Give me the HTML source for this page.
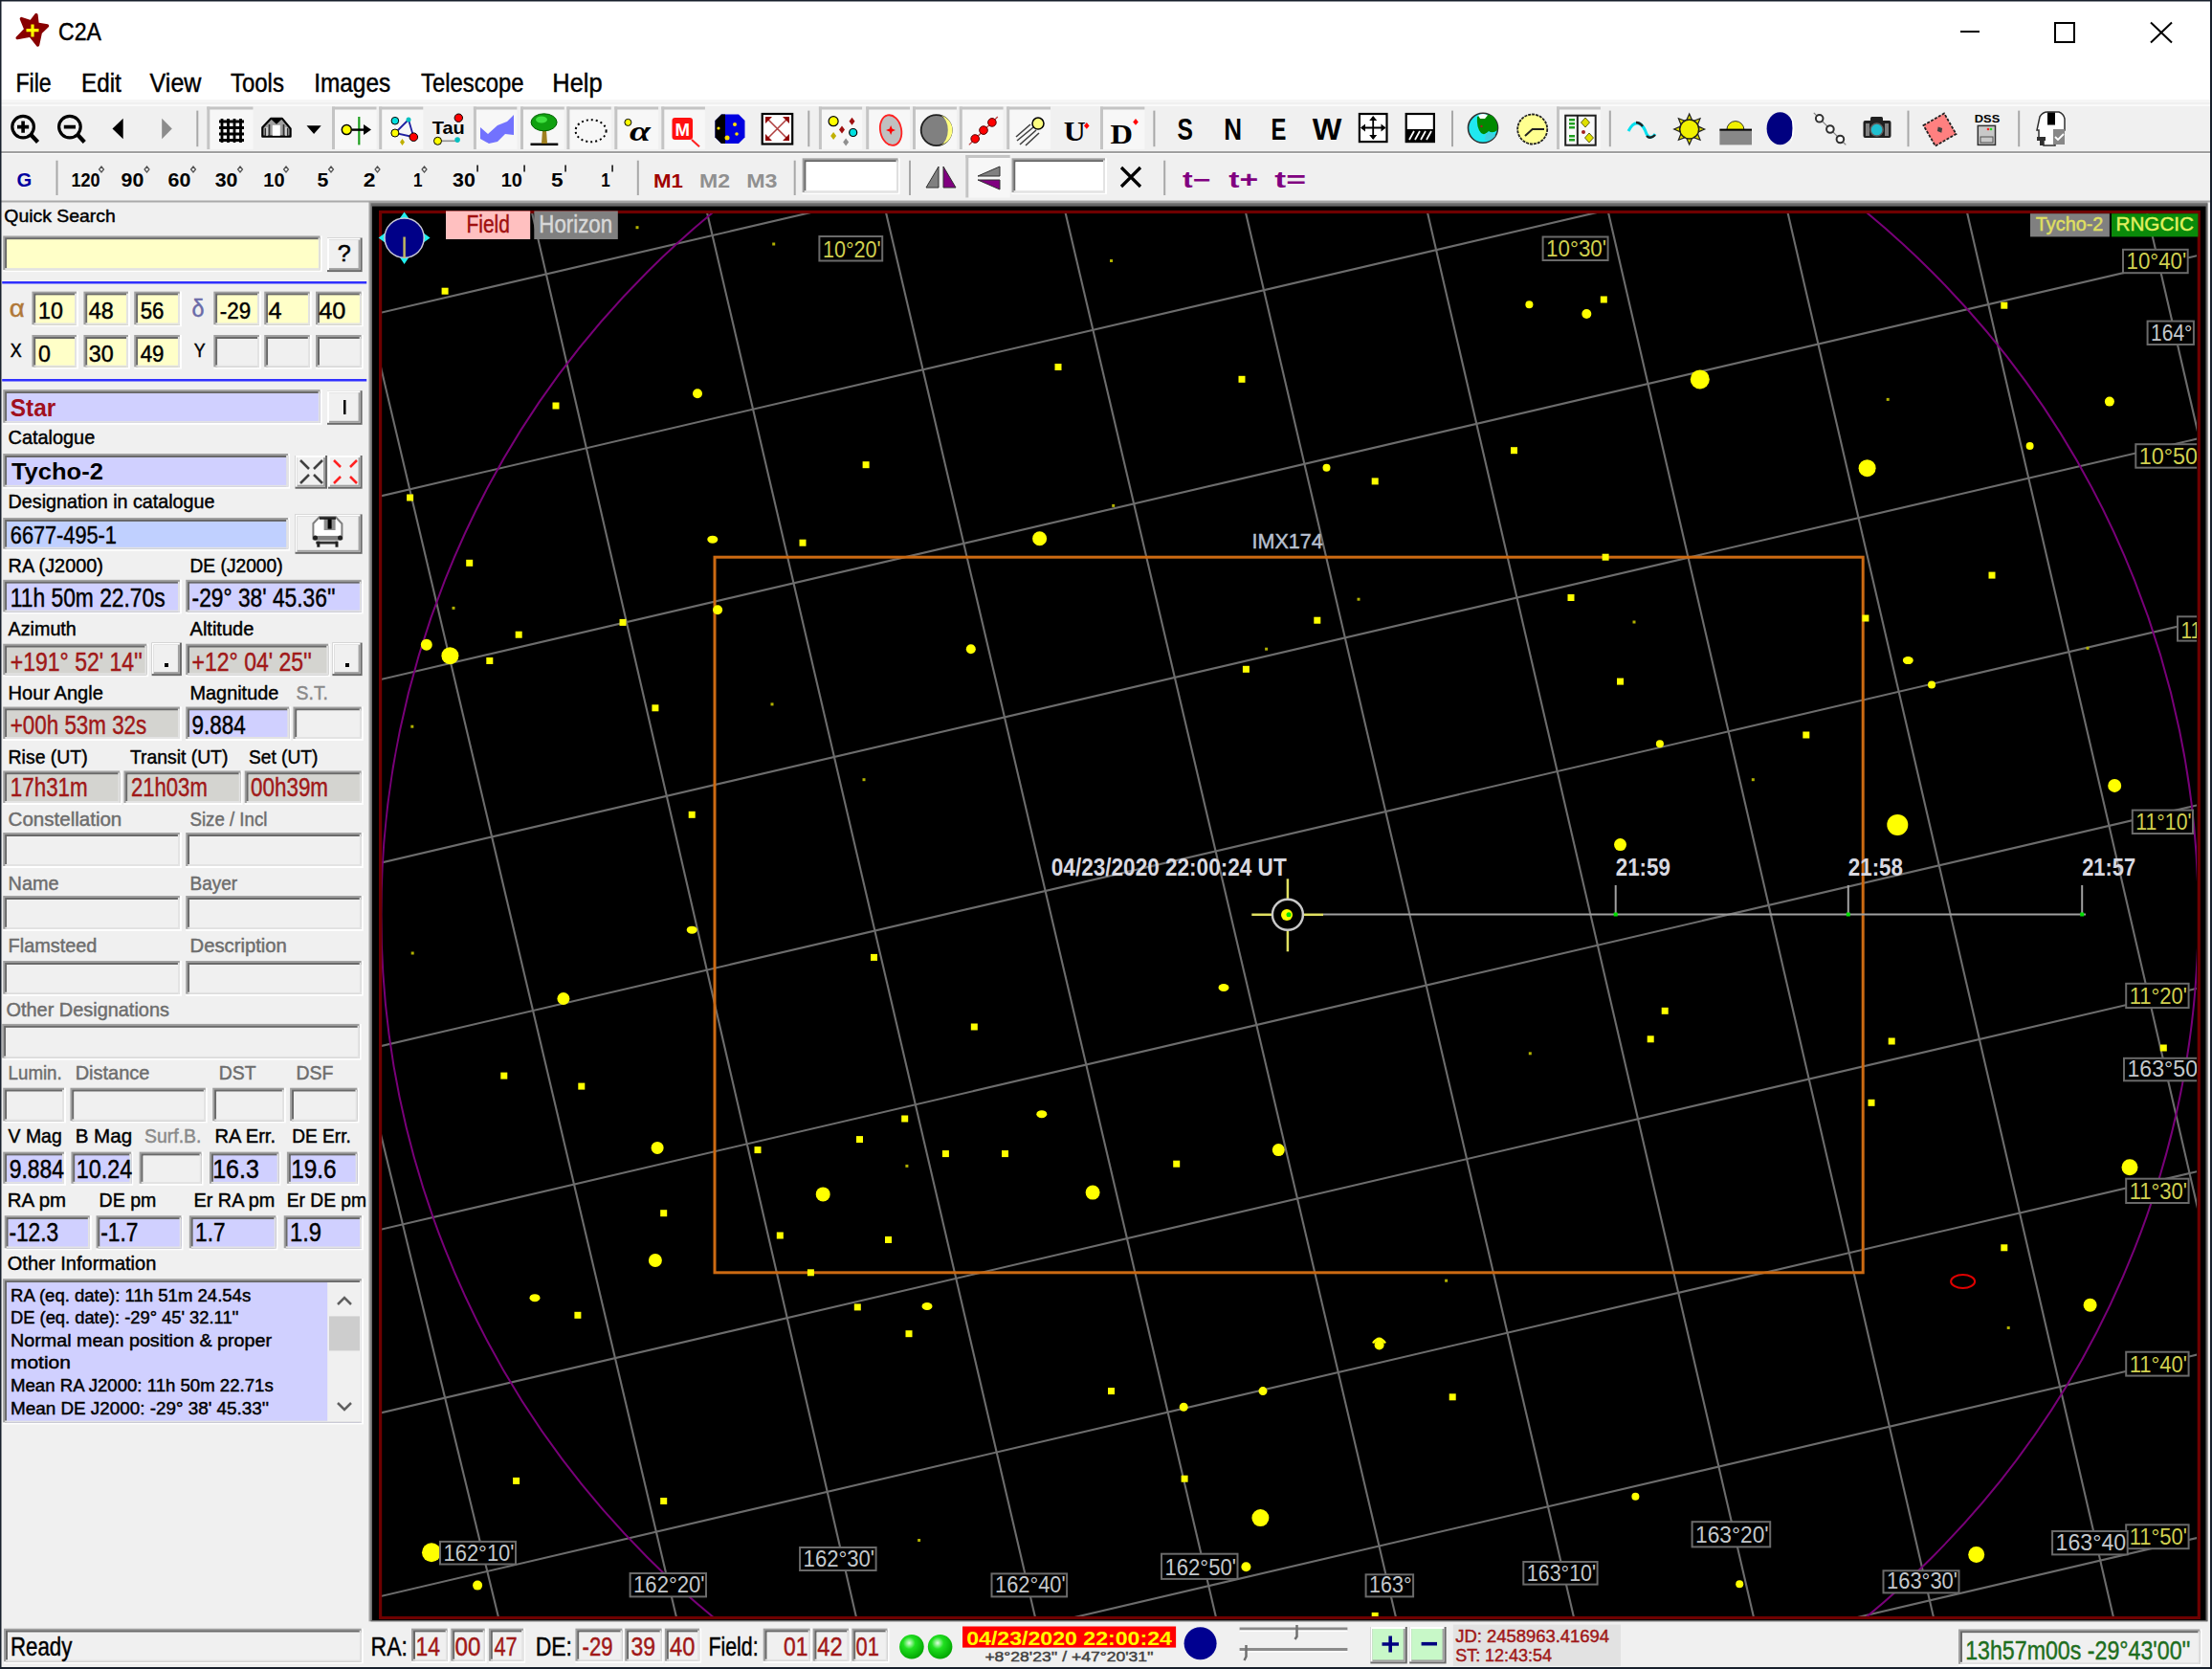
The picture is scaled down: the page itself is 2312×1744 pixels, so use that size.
<!DOCTYPE html>
<html><head><meta charset="utf-8"><style>html,body{margin:0;padding:0;background:#f0f0f0;overflow:hidden}svg{display:block}</style></head>
<body><svg width="2312" height="1744" viewBox="0 0 2312 1744">
<rect x="0" y="0" width="2312" height="1744" fill="#f0f0f0" />
<rect x="0" y="0" width="2312" height="107" fill="#ffffff" />
<path d="M37.9 15.6 L39 25.1 L49.5 27 L42.2 34.1 L39.5 47 L31.6 37 L18.2 39.6 L26.9 30.7 L22.4 19.6 L32.4 22.8Z" fill="#880000" stroke="#880000" stroke-width="3.5" stroke-linejoin="round"/>
<path d="M34 25.5 L34 38.5 M27.5 31.7 L40.5 31.7" stroke="#ffff00" stroke-width="3.2"/>
<text x="61" y="42.4" font-family="Liberation Sans" font-size="26" fill="#000" font-weight="normal" text-anchor="start" textLength="44.8" lengthAdjust="spacingAndGlyphs" stroke="#000" stroke-width="0.45" >C2A</text>
<rect x="2049" y="32" width="20" height="2" fill="#000" />
<rect x="2148" y="24" width="20" height="20" fill="none" stroke="#000" stroke-width="2"/>
<path d="M2248 23.5 L2270 44.5 M2270 23.5 L2248 44.5" stroke="#000" stroke-width="2"/>
<text x="16.4" y="96.4" font-family="Liberation Sans" font-size="27.5" fill="#000" font-weight="normal" text-anchor="start" textLength="37.3" lengthAdjust="spacingAndGlyphs" stroke="#000" stroke-width="0.45" >File</text>
<text x="85" y="96.4" font-family="Liberation Sans" font-size="27.5" fill="#000" font-weight="normal" text-anchor="start" textLength="41.8" lengthAdjust="spacingAndGlyphs" stroke="#000" stroke-width="0.45" >Edit</text>
<text x="156.6" y="96.4" font-family="Liberation Sans" font-size="27.5" fill="#000" font-weight="normal" text-anchor="start" textLength="53.8" lengthAdjust="spacingAndGlyphs" stroke="#000" stroke-width="0.45" >View</text>
<text x="241" y="96.4" font-family="Liberation Sans" font-size="27.5" fill="#000" font-weight="normal" text-anchor="start" textLength="55.9" lengthAdjust="spacingAndGlyphs" stroke="#000" stroke-width="0.45" >Tools</text>
<text x="328.2" y="96.4" font-family="Liberation Sans" font-size="27.5" fill="#000" font-weight="normal" text-anchor="start" textLength="80.0" lengthAdjust="spacingAndGlyphs" stroke="#000" stroke-width="0.45" >Images</text>
<text x="440.1" y="96.4" font-family="Liberation Sans" font-size="27.5" fill="#000" font-weight="normal" text-anchor="start" textLength="107.4" lengthAdjust="spacingAndGlyphs" stroke="#000" stroke-width="0.45" >Telescope</text>
<text x="577.3" y="96.4" font-family="Liberation Sans" font-size="27.5" fill="#000" font-weight="normal" text-anchor="start" textLength="52.3" lengthAdjust="spacingAndGlyphs" stroke="#000" stroke-width="0.45" >Help</text>
<rect x="0" y="104" width="2312" height="3" fill="#f6f6f6" />
<rect x="0" y="107" width="2312" height="52" fill="#f0f0f0" />
<rect x="0" y="109.2" width="2312" height="1.8" fill="#fbfbfb" />
<rect x="0" y="158" width="2312" height="2" fill="#a0a0a0" />
<rect x="0" y="160" width="2312" height="1" fill="#ffffff" />
<rect x="0" y="161" width="2312" height="49" fill="#f0f0f0" />
<rect x="0" y="209.5" width="2312" height="2" fill="#aaaaaa" />
<text x="4.3" y="232.4" font-family="Liberation Sans" font-size="19" fill="#000" font-weight="normal" text-anchor="start" textLength="116.5" lengthAdjust="spacingAndGlyphs" stroke="#000" stroke-width="0.45" >Quick Search</text>
<rect x="3.2" y="246.4" width="333.40000000000003" height="37.70000000000002" fill="#ffffff" />
<rect x="3.2" y="246.4" width="331.40000000000003" height="35.70000000000002" fill="#a0a0a0" />
<rect x="5.2" y="248.4" width="329.40000000000003" height="33.70000000000002" fill="#696969" />
<rect x="7.2" y="250.4" width="327.40000000000003" height="31.700000000000017" fill="#ffffc8" />
<rect x="5.2" y="280.1" width="329.40000000000003" height="2" fill="#e3e3e3" />
<rect x="332.6" y="248.4" width="2" height="33.70000000000002" fill="#e3e3e3" />
<rect x="7.2" y="250.4" width="325.40000000000003" height="29.700000000000017" fill="#ffffc8" />
<rect x="342" y="248.5" width="36.60000000000002" height="35.60000000000002" fill="#696969" />
<rect x="342" y="248.5" width="34.60000000000002" height="33.60000000000002" fill="#ffffff" />
<rect x="344" y="250.5" width="32.60000000000002" height="31.600000000000023" fill="#a0a0a0" />
<rect x="344" y="250.5" width="30.600000000000023" height="29.600000000000023" fill="#f0f0f0" />
<text x="352.8" y="273.4" font-family="Liberation Sans" font-size="24" fill="#000" font-weight="normal" text-anchor="start" textLength="14.0" lengthAdjust="spacingAndGlyphs" stroke="#000" stroke-width="0.45" >?</text>
<rect x="2.2" y="294" width="381" height="2.5" fill="#3030ff" />
<text x="9.7" y="330.5" font-family="Liberation Sans" font-size="26" fill="#b07838" font-weight="normal" text-anchor="start" textLength="16" lengthAdjust="spacingAndGlyphs" stroke="#b07838" stroke-width="0.45" >α</text>
<rect x="33.4" y="304.6" width="48.6" height="36.69999999999999" fill="#ffffff" />
<rect x="33.4" y="304.6" width="46.6" height="34.69999999999999" fill="#a0a0a0" />
<rect x="35.4" y="306.6" width="44.6" height="32.69999999999999" fill="#696969" />
<rect x="37.4" y="308.6" width="42.6" height="30.69999999999999" fill="#ffffc8" />
<rect x="35.4" y="337.3" width="44.6" height="2" fill="#e3e3e3" />
<rect x="78" y="306.6" width="2" height="32.69999999999999" fill="#e3e3e3" />
<rect x="37.4" y="308.6" width="40.6" height="28.69999999999999" fill="#ffffc8" />
<rect x="87.4" y="304.6" width="48.599999999999994" height="36.69999999999999" fill="#ffffff" />
<rect x="87.4" y="304.6" width="46.599999999999994" height="34.69999999999999" fill="#a0a0a0" />
<rect x="89.4" y="306.6" width="44.599999999999994" height="32.69999999999999" fill="#696969" />
<rect x="91.4" y="308.6" width="42.599999999999994" height="30.69999999999999" fill="#ffffc8" />
<rect x="89.4" y="337.3" width="44.599999999999994" height="2" fill="#e3e3e3" />
<rect x="132" y="306.6" width="2" height="32.69999999999999" fill="#e3e3e3" />
<rect x="91.4" y="308.6" width="40.599999999999994" height="28.69999999999999" fill="#ffffc8" />
<rect x="140.2" y="304.6" width="49.70000000000002" height="36.69999999999999" fill="#ffffff" />
<rect x="140.2" y="304.6" width="47.70000000000002" height="34.69999999999999" fill="#a0a0a0" />
<rect x="142.2" y="306.6" width="45.70000000000002" height="32.69999999999999" fill="#696969" />
<rect x="144.2" y="308.6" width="43.70000000000002" height="30.69999999999999" fill="#ffffc8" />
<rect x="142.2" y="337.3" width="45.70000000000002" height="2" fill="#e3e3e3" />
<rect x="185.9" y="306.6" width="2" height="32.69999999999999" fill="#e3e3e3" />
<rect x="144.2" y="308.6" width="41.70000000000002" height="28.69999999999999" fill="#ffffc8" />
<rect x="223.3" y="304.6" width="49.69999999999999" height="36.69999999999999" fill="#ffffff" />
<rect x="223.3" y="304.6" width="47.69999999999999" height="34.69999999999999" fill="#a0a0a0" />
<rect x="225.3" y="306.6" width="45.69999999999999" height="32.69999999999999" fill="#696969" />
<rect x="227.3" y="308.6" width="43.69999999999999" height="30.69999999999999" fill="#ffffc8" />
<rect x="225.3" y="337.3" width="45.69999999999999" height="2" fill="#e3e3e3" />
<rect x="269" y="306.6" width="2" height="32.69999999999999" fill="#e3e3e3" />
<rect x="227.3" y="308.6" width="41.69999999999999" height="28.69999999999999" fill="#ffffc8" />
<rect x="276.2" y="304.6" width="49.60000000000002" height="36.69999999999999" fill="#ffffff" />
<rect x="276.2" y="304.6" width="47.60000000000002" height="34.69999999999999" fill="#a0a0a0" />
<rect x="278.2" y="306.6" width="45.60000000000002" height="32.69999999999999" fill="#696969" />
<rect x="280.2" y="308.6" width="43.60000000000002" height="30.69999999999999" fill="#ffffc8" />
<rect x="278.2" y="337.3" width="45.60000000000002" height="2" fill="#e3e3e3" />
<rect x="321.8" y="306.6" width="2" height="32.69999999999999" fill="#e3e3e3" />
<rect x="280.2" y="308.6" width="41.60000000000002" height="28.69999999999999" fill="#ffffc8" />
<rect x="330" y="304.6" width="49.69999999999999" height="36.69999999999999" fill="#ffffff" />
<rect x="330" y="304.6" width="47.69999999999999" height="34.69999999999999" fill="#a0a0a0" />
<rect x="332" y="306.6" width="45.69999999999999" height="32.69999999999999" fill="#696969" />
<rect x="334" y="308.6" width="43.69999999999999" height="30.69999999999999" fill="#ffffc8" />
<rect x="332" y="337.3" width="45.69999999999999" height="2" fill="#e3e3e3" />
<rect x="375.7" y="306.6" width="2" height="32.69999999999999" fill="#e3e3e3" />
<rect x="334" y="308.6" width="41.69999999999999" height="28.69999999999999" fill="#ffffc8" />
<text x="200.6" y="330.5" font-family="Liberation Sans" font-size="26" fill="#6a6aa8" font-weight="normal" text-anchor="start" textLength="13" lengthAdjust="spacingAndGlyphs" stroke="#6a6aa8" stroke-width="0.45" >δ</text>
<text x="40" y="332.7" font-family="Liberation Sans" font-size="23.5" fill="#000" font-weight="normal" text-anchor="start" textLength="25.8" lengthAdjust="spacingAndGlyphs" stroke="#000" stroke-width="0.45" >10</text>
<text x="92.8" y="332.7" font-family="Liberation Sans" font-size="23.5" fill="#000" font-weight="normal" text-anchor="start" textLength="25.9" lengthAdjust="spacingAndGlyphs" stroke="#000" stroke-width="0.45" >48</text>
<text x="146.7" y="332.7" font-family="Liberation Sans" font-size="23.5" fill="#000" font-weight="normal" text-anchor="start" textLength="24.8" lengthAdjust="spacingAndGlyphs" stroke="#000" stroke-width="0.45" >56</text>
<text x="229.8" y="332.7" font-family="Liberation Sans" font-size="23.5" fill="#000" font-weight="normal" text-anchor="start" textLength="32.3" lengthAdjust="spacingAndGlyphs" stroke="#000" stroke-width="0.45" >-29</text>
<text x="280.5" y="332.7" font-family="Liberation Sans" font-size="23.5" fill="#000" font-weight="normal" text-anchor="start" textLength="14.0" lengthAdjust="spacingAndGlyphs" stroke="#000" stroke-width="0.45" >4</text>
<text x="333.3" y="332.7" font-family="Liberation Sans" font-size="23.5" fill="#000" font-weight="normal" text-anchor="start" textLength="28.1" lengthAdjust="spacingAndGlyphs" stroke="#000" stroke-width="0.45" >40</text>
<rect x="33.4" y="350" width="48.6" height="35.5" fill="#ffffff" />
<rect x="33.4" y="350" width="46.6" height="33.5" fill="#a0a0a0" />
<rect x="35.4" y="352" width="44.6" height="31.5" fill="#696969" />
<rect x="37.4" y="354" width="42.6" height="29.5" fill="#ffffc8" />
<rect x="35.4" y="381.5" width="44.6" height="2" fill="#e3e3e3" />
<rect x="78" y="352" width="2" height="31.5" fill="#e3e3e3" />
<rect x="37.4" y="354" width="40.6" height="27.5" fill="#ffffc8" />
<rect x="87.4" y="350" width="48.599999999999994" height="35.5" fill="#ffffff" />
<rect x="87.4" y="350" width="46.599999999999994" height="33.5" fill="#a0a0a0" />
<rect x="89.4" y="352" width="44.599999999999994" height="31.5" fill="#696969" />
<rect x="91.4" y="354" width="42.599999999999994" height="29.5" fill="#ffffc8" />
<rect x="89.4" y="381.5" width="44.599999999999994" height="2" fill="#e3e3e3" />
<rect x="132" y="352" width="2" height="31.5" fill="#e3e3e3" />
<rect x="91.4" y="354" width="40.599999999999994" height="27.5" fill="#ffffc8" />
<rect x="140.2" y="350" width="49.70000000000002" height="35.5" fill="#ffffff" />
<rect x="140.2" y="350" width="47.70000000000002" height="33.5" fill="#a0a0a0" />
<rect x="142.2" y="352" width="45.70000000000002" height="31.5" fill="#696969" />
<rect x="144.2" y="354" width="43.70000000000002" height="29.5" fill="#ffffc8" />
<rect x="142.2" y="381.5" width="45.70000000000002" height="2" fill="#e3e3e3" />
<rect x="185.9" y="352" width="2" height="31.5" fill="#e3e3e3" />
<rect x="144.2" y="354" width="41.70000000000002" height="27.5" fill="#ffffc8" />
<rect x="223.3" y="350" width="49.69999999999999" height="35.5" fill="#ffffff" />
<rect x="223.3" y="350" width="47.69999999999999" height="33.5" fill="#a0a0a0" />
<rect x="225.3" y="352" width="45.69999999999999" height="31.5" fill="#696969" />
<rect x="227.3" y="354" width="43.69999999999999" height="29.5" fill="#f0f0f0" />
<rect x="225.3" y="381.5" width="45.69999999999999" height="2" fill="#e3e3e3" />
<rect x="269" y="352" width="2" height="31.5" fill="#e3e3e3" />
<rect x="227.3" y="354" width="41.69999999999999" height="27.5" fill="#f0f0f0" />
<rect x="276.2" y="350" width="49.60000000000002" height="35.5" fill="#ffffff" />
<rect x="276.2" y="350" width="47.60000000000002" height="33.5" fill="#a0a0a0" />
<rect x="278.2" y="352" width="45.60000000000002" height="31.5" fill="#696969" />
<rect x="280.2" y="354" width="43.60000000000002" height="29.5" fill="#f0f0f0" />
<rect x="278.2" y="381.5" width="45.60000000000002" height="2" fill="#e3e3e3" />
<rect x="321.8" y="352" width="2" height="31.5" fill="#e3e3e3" />
<rect x="280.2" y="354" width="41.60000000000002" height="27.5" fill="#f0f0f0" />
<rect x="330" y="350" width="49.69999999999999" height="35.5" fill="#ffffff" />
<rect x="330" y="350" width="47.69999999999999" height="33.5" fill="#a0a0a0" />
<rect x="332" y="352" width="45.69999999999999" height="31.5" fill="#696969" />
<rect x="334" y="354" width="43.69999999999999" height="29.5" fill="#f0f0f0" />
<rect x="332" y="381.5" width="45.69999999999999" height="2" fill="#e3e3e3" />
<rect x="375.7" y="352" width="2" height="31.5" fill="#e3e3e3" />
<rect x="334" y="354" width="41.69999999999999" height="27.5" fill="#f0f0f0" />
<text x="10.8" y="372.6" font-family="Liberation Sans" font-size="20" fill="#000" font-weight="normal" text-anchor="start" textLength="11.9" lengthAdjust="spacingAndGlyphs" stroke="#000" stroke-width="0.45" >X</text>
<text x="202.8" y="372.6" font-family="Liberation Sans" font-size="20" fill="#000" font-weight="normal" text-anchor="start" textLength="11.9" lengthAdjust="spacingAndGlyphs" stroke="#000" stroke-width="0.45" >Y</text>
<text x="40" y="378" font-family="Liberation Sans" font-size="23.5" fill="#000" font-weight="normal" text-anchor="start" textLength="12.9" lengthAdjust="spacingAndGlyphs" stroke="#000" stroke-width="0.45" >0</text>
<text x="92.8" y="378" font-family="Liberation Sans" font-size="23.5" fill="#000" font-weight="normal" text-anchor="start" textLength="25.9" lengthAdjust="spacingAndGlyphs" stroke="#000" stroke-width="0.45" >30</text>
<text x="146.7" y="378" font-family="Liberation Sans" font-size="23.5" fill="#000" font-weight="normal" text-anchor="start" textLength="24.8" lengthAdjust="spacingAndGlyphs" stroke="#000" stroke-width="0.45" >49</text>
<rect x="2.2" y="396" width="381" height="2.5" fill="#3030ff" />
<rect x="3.2" y="407.1" width="333.40000000000003" height="36.69999999999999" fill="#ffffff" />
<rect x="3.2" y="407.1" width="331.40000000000003" height="34.69999999999999" fill="#a0a0a0" />
<rect x="5.2" y="409.1" width="329.40000000000003" height="32.69999999999999" fill="#696969" />
<rect x="7.2" y="411.1" width="327.40000000000003" height="30.69999999999999" fill="#d0d0ff" />
<rect x="5.2" y="439.8" width="329.40000000000003" height="2" fill="#e3e3e3" />
<rect x="332.6" y="409.1" width="2" height="32.69999999999999" fill="#e3e3e3" />
<rect x="7.2" y="411.1" width="325.40000000000003" height="28.69999999999999" fill="#d0d0ff" />
<text x="10.8" y="435.2" font-family="Liberation Sans" font-size="26.7" fill="#a01020" font-weight="bold" text-anchor="start" textLength="47.5" lengthAdjust="spacingAndGlyphs" >Star</text>
<rect x="342" y="408.2" width="36.60000000000002" height="35.60000000000002" fill="#696969" />
<rect x="342" y="408.2" width="34.60000000000002" height="33.60000000000002" fill="#ffffff" />
<rect x="344" y="410.2" width="32.60000000000002" height="31.600000000000023" fill="#a0a0a0" />
<rect x="344" y="410.2" width="30.600000000000023" height="29.600000000000023" fill="#f0f0f0" />
<rect x="359" y="418" width="2.5" height="15" fill="#000" />
<text x="8.6" y="464.3" font-family="Liberation Sans" font-size="20.3" fill="#000" font-weight="normal" text-anchor="start" textLength="90.6" lengthAdjust="spacingAndGlyphs" stroke="#000" stroke-width="0.45" >Catalogue</text>
<rect x="3.2" y="474" width="299.90000000000003" height="36.69999999999999" fill="#ffffff" />
<rect x="3.2" y="474" width="297.90000000000003" height="34.69999999999999" fill="#a0a0a0" />
<rect x="5.2" y="476" width="295.90000000000003" height="32.69999999999999" fill="#696969" />
<rect x="7.2" y="478" width="293.90000000000003" height="30.69999999999999" fill="#d0d0ff" />
<rect x="5.2" y="506.7" width="295.90000000000003" height="2" fill="#e3e3e3" />
<rect x="299.1" y="476" width="2" height="32.69999999999999" fill="#e3e3e3" />
<rect x="7.2" y="478" width="291.90000000000003" height="28.69999999999999" fill="#d0d0ff" />
<text x="11.9" y="501" font-family="Liberation Sans" font-size="23.5" fill="#000" font-weight="bold" text-anchor="start" textLength="96.0" lengthAdjust="spacingAndGlyphs" >Tycho-2</text>
<rect x="308.5" y="476" width="33.5" height="34.69999999999999" fill="#696969" />
<rect x="308.5" y="476" width="31.5" height="32.69999999999999" fill="#ffffff" />
<rect x="310.5" y="478" width="29.5" height="30.69999999999999" fill="#a0a0a0" />
<rect x="310.5" y="478" width="27.5" height="28.69999999999999" fill="#f0f0f0" />
<rect x="343" y="476" width="35.60000000000002" height="34.69999999999999" fill="#696969" />
<rect x="343" y="476" width="33.60000000000002" height="32.69999999999999" fill="#ffffff" />
<rect x="345" y="478" width="31.600000000000023" height="30.69999999999999" fill="#a0a0a0" />
<rect x="345" y="478" width="29.600000000000023" height="28.69999999999999" fill="#f0f0f0" />
<g stroke="#404040" stroke-width="2.5" fill="none"><path d="M314 481 L323 490 M337 481 L328 490 M314 505 L323 496 M337 505 L328 496"/></g>
<g stroke="#ff2020" stroke-width="2.5" fill="none"><path d="M349 481 L356 488 M373 481 L366 488 M349 505 L356 498 M373 505 L366 498"/></g>
<text x="8.6" y="531.2" font-family="Liberation Sans" font-size="20.3" fill="#000" font-weight="normal" text-anchor="start" textLength="215.8" lengthAdjust="spacingAndGlyphs" stroke="#000" stroke-width="0.45" >Designation in catalogue</text>
<rect x="3.2" y="541" width="299.90000000000003" height="34.60000000000002" fill="#ffffff" />
<rect x="3.2" y="541" width="297.90000000000003" height="32.60000000000002" fill="#a0a0a0" />
<rect x="5.2" y="543" width="295.90000000000003" height="30.600000000000023" fill="#696969" />
<rect x="7.2" y="545" width="293.90000000000003" height="28.600000000000023" fill="#c0d0ff" />
<rect x="5.2" y="571.6" width="295.90000000000003" height="2" fill="#e3e3e3" />
<rect x="299.1" y="543" width="2" height="30.600000000000023" fill="#e3e3e3" />
<rect x="7.2" y="545" width="291.90000000000003" height="26.600000000000023" fill="#c0d0ff" />
<text x="10.8" y="568" font-family="Liberation Sans" font-size="25.6" fill="#000" font-weight="normal" text-anchor="start" textLength="111.1" lengthAdjust="spacingAndGlyphs" stroke="#000" stroke-width="0.45" >6677-495-1</text>
<rect x="308.5" y="537.4" width="70.10000000000002" height="41.39999999999998" fill="#696969" />
<rect x="308.5" y="537.4" width="68.10000000000002" height="39.39999999999998" fill="#ffffff" />
<rect x="310.5" y="539.4" width="66.10000000000002" height="37.39999999999998" fill="#a0a0a0" />
<rect x="310.5" y="539.4" width="64.10000000000002" height="35.39999999999998" fill="#f0f0f0" />
<g><path d="M327.4 562.8 V547 L333.9 540.3 H350.9 L357.4 547.2 V562.8Z" fill="#ffffff" stroke="#808080" stroke-width="2"/><rect x="338.6" y="541" width="12" height="13" fill="#909090"/><rect x="342.6" y="541" width="4" height="11.6" fill="#000"/><rect x="333.9" y="540.3" width="17" height="2.5" fill="#202020"/><rect x="327.4" y="559.9" width="30" height="4.7" fill="#808080"/><circle cx="329.5" cy="562" r="2.5" fill="#202020"/><circle cx="355.5" cy="562" r="2.5" fill="#202020"/><rect x="330.3" y="565.7" width="22.4" height="2.8" fill="#303030"/><rect x="331.3" y="565.7" width="3" height="6" fill="#202020"/><rect x="350.5" y="565.7" width="3" height="6" fill="#202020"/></g>
<text x="8.6" y="598.3" font-family="Liberation Sans" font-size="20.3" fill="#000" font-weight="normal" text-anchor="start" textLength="99.3" lengthAdjust="spacingAndGlyphs" stroke="#000" stroke-width="0.45" >RA (J2000)</text>
<text x="198.5" y="598.3" font-family="Liberation Sans" font-size="20.3" fill="#000" font-weight="normal" text-anchor="start" textLength="97.1" lengthAdjust="spacingAndGlyphs" stroke="#000" stroke-width="0.45" >DE (J2000)</text>
<rect x="3.2" y="605.8" width="186.70000000000002" height="35.60000000000002" fill="#ffffff" />
<rect x="3.2" y="605.8" width="184.70000000000002" height="33.60000000000002" fill="#a0a0a0" />
<rect x="5.2" y="607.8" width="182.70000000000002" height="31.600000000000023" fill="#696969" />
<rect x="7.2" y="609.8" width="180.70000000000002" height="29.600000000000023" fill="#d0d0ff" />
<rect x="5.2" y="637.4" width="182.70000000000002" height="2" fill="#e3e3e3" />
<rect x="185.9" y="607.8" width="2" height="31.600000000000023" fill="#e3e3e3" />
<rect x="7.2" y="609.8" width="178.70000000000002" height="27.600000000000023" fill="#d0d0ff" />
<rect x="194.2" y="605.8" width="185.5" height="35.60000000000002" fill="#ffffff" />
<rect x="194.2" y="605.8" width="183.5" height="33.60000000000002" fill="#a0a0a0" />
<rect x="196.2" y="607.8" width="181.5" height="31.600000000000023" fill="#696969" />
<rect x="198.2" y="609.8" width="179.5" height="29.600000000000023" fill="#d0d0ff" />
<rect x="196.2" y="637.4" width="181.5" height="2" fill="#e3e3e3" />
<rect x="375.7" y="607.8" width="2" height="31.600000000000023" fill="#e3e3e3" />
<rect x="198.2" y="609.8" width="177.5" height="27.600000000000023" fill="#d0d0ff" />
<text x="10.8" y="633.9" font-family="Liberation Sans" font-size="27" fill="#000" font-weight="normal" text-anchor="start" textLength="161.8" lengthAdjust="spacingAndGlyphs" stroke="#000" stroke-width="0.45" >11h 50m 22.70s</text>
<text x="200.6" y="633.9" font-family="Liberation Sans" font-size="27" fill="#000" font-weight="normal" text-anchor="start" textLength="150.0" lengthAdjust="spacingAndGlyphs" stroke="#000" stroke-width="0.45" >-29° 38' 45.36''</text>
<text x="8.6" y="664" font-family="Liberation Sans" font-size="20.3" fill="#000" font-weight="normal" text-anchor="start" textLength="71.2" lengthAdjust="spacingAndGlyphs" stroke="#000" stroke-width="0.45" >Azimuth</text>
<text x="198.5" y="664" font-family="Liberation Sans" font-size="20.3" fill="#000" font-weight="normal" text-anchor="start" textLength="66.9" lengthAdjust="spacingAndGlyphs" stroke="#000" stroke-width="0.45" >Altitude</text>
<rect x="3.2" y="672.7" width="152.10000000000002" height="34.5" fill="#ffffff" />
<rect x="3.2" y="672.7" width="150.10000000000002" height="32.5" fill="#a0a0a0" />
<rect x="5.2" y="674.7" width="148.10000000000002" height="30.5" fill="#696969" />
<rect x="7.2" y="676.7" width="146.10000000000002" height="28.5" fill="#d4d4d0" />
<rect x="5.2" y="703.2" width="148.10000000000002" height="2" fill="#e3e3e3" />
<rect x="151.3" y="674.7" width="2" height="30.5" fill="#e3e3e3" />
<rect x="7.2" y="676.7" width="144.10000000000002" height="26.5" fill="#d4d4d0" />
<rect x="158.6" y="671.6" width="31.30000000000001" height="34.5" fill="#696969" />
<rect x="158.6" y="671.6" width="29.30000000000001" height="32.5" fill="#ffffff" />
<rect x="160.6" y="673.6" width="27.30000000000001" height="30.5" fill="#a0a0a0" />
<rect x="160.6" y="673.6" width="25.30000000000001" height="28.5" fill="#f0f0f0" />
<rect x="194.2" y="672.7" width="151.0" height="34.5" fill="#ffffff" />
<rect x="194.2" y="672.7" width="149.0" height="32.5" fill="#a0a0a0" />
<rect x="196.2" y="674.7" width="147.0" height="30.5" fill="#696969" />
<rect x="198.2" y="676.7" width="145.0" height="28.5" fill="#d4d4d0" />
<rect x="196.2" y="703.2" width="147.0" height="2" fill="#e3e3e3" />
<rect x="341.2" y="674.7" width="2" height="30.5" fill="#e3e3e3" />
<rect x="198.2" y="676.7" width="143.0" height="26.5" fill="#d4d4d0" />
<rect x="347.4" y="671.6" width="31.200000000000045" height="34.5" fill="#696969" />
<rect x="347.4" y="671.6" width="29.200000000000045" height="32.5" fill="#ffffff" />
<rect x="349.4" y="673.6" width="27.200000000000045" height="30.5" fill="#a0a0a0" />
<rect x="349.4" y="673.6" width="25.200000000000045" height="28.5" fill="#f0f0f0" />
<rect x="172" y="693" width="4" height="4" fill="#000" />
<rect x="361" y="693" width="4" height="4" fill="#000" />
<text x="10.8" y="700.7" font-family="Liberation Sans" font-size="27" fill="#a01818" font-weight="normal" text-anchor="start" textLength="138.1" lengthAdjust="spacingAndGlyphs" stroke="#a01818" stroke-width="0.45" >+191° 52' 14''</text>
<text x="200.6" y="700.7" font-family="Liberation Sans" font-size="27" fill="#a01818" font-weight="normal" text-anchor="start" textLength="125.2" lengthAdjust="spacingAndGlyphs" stroke="#a01818" stroke-width="0.45" >+12° 04' 25''</text>
<text x="8.6" y="730.9" font-family="Liberation Sans" font-size="20.3" fill="#000" font-weight="normal" text-anchor="start" textLength="99.3" lengthAdjust="spacingAndGlyphs" stroke="#000" stroke-width="0.45" >Hour Angle</text>
<text x="198.5" y="730.9" font-family="Liberation Sans" font-size="20.3" fill="#000" font-weight="normal" text-anchor="start" textLength="92.8" lengthAdjust="spacingAndGlyphs" stroke="#000" stroke-width="0.45" >Magnitude</text>
<text x="309.6" y="730.9" font-family="Liberation Sans" font-size="20.3" fill="#8a8a8a" font-weight="normal" text-anchor="start" textLength="33.4" lengthAdjust="spacingAndGlyphs" stroke="#8a8a8a" stroke-width="0.45" >S.T.</text>
<rect x="3.2" y="738.5" width="186.70000000000002" height="35.5" fill="#ffffff" />
<rect x="3.2" y="738.5" width="184.70000000000002" height="33.5" fill="#a0a0a0" />
<rect x="5.2" y="740.5" width="182.70000000000002" height="31.5" fill="#696969" />
<rect x="7.2" y="742.5" width="180.70000000000002" height="29.5" fill="#d4d4d0" />
<rect x="5.2" y="770" width="182.70000000000002" height="2" fill="#e3e3e3" />
<rect x="185.9" y="740.5" width="2" height="31.5" fill="#e3e3e3" />
<rect x="7.2" y="742.5" width="178.70000000000002" height="27.5" fill="#d4d4d0" />
<rect x="194.2" y="738.5" width="110.0" height="35.5" fill="#ffffff" />
<rect x="194.2" y="738.5" width="108.0" height="33.5" fill="#a0a0a0" />
<rect x="196.2" y="740.5" width="106.0" height="31.5" fill="#696969" />
<rect x="198.2" y="742.5" width="104.0" height="29.5" fill="#d0d0ff" />
<rect x="196.2" y="770" width="106.0" height="2" fill="#e3e3e3" />
<rect x="300.2" y="740.5" width="2" height="31.5" fill="#e3e3e3" />
<rect x="198.2" y="742.5" width="102.0" height="27.5" fill="#d0d0ff" />
<rect x="306.4" y="738.5" width="73.30000000000001" height="35.5" fill="#ffffff" />
<rect x="306.4" y="738.5" width="71.30000000000001" height="33.5" fill="#a0a0a0" />
<rect x="308.4" y="740.5" width="69.30000000000001" height="31.5" fill="#696969" />
<rect x="310.4" y="742.5" width="67.30000000000001" height="29.5" fill="#f0f0f0" />
<rect x="308.4" y="770" width="69.30000000000001" height="2" fill="#e3e3e3" />
<rect x="375.7" y="740.5" width="2" height="31.5" fill="#e3e3e3" />
<rect x="310.4" y="742.5" width="65.30000000000001" height="27.5" fill="#f0f0f0" />
<text x="10.8" y="766.5" font-family="Liberation Sans" font-size="27" fill="#a01818" font-weight="normal" text-anchor="start" textLength="142.4" lengthAdjust="spacingAndGlyphs" stroke="#a01818" stroke-width="0.45" >+00h 53m 32s</text>
<text x="200.6" y="766.5" font-family="Liberation Sans" font-size="27" fill="#000" font-weight="normal" text-anchor="start" textLength="56.1" lengthAdjust="spacingAndGlyphs" stroke="#000" stroke-width="0.45" >9.884</text>
<text x="8.6" y="797.8" font-family="Liberation Sans" font-size="20.3" fill="#000" font-weight="normal" text-anchor="start" textLength="83.1" lengthAdjust="spacingAndGlyphs" stroke="#000" stroke-width="0.45" >Rise (UT)</text>
<text x="135.9" y="797.8" font-family="Liberation Sans" font-size="20.3" fill="#000" font-weight="normal" text-anchor="start" textLength="102.5" lengthAdjust="spacingAndGlyphs" stroke="#000" stroke-width="0.45" >Transit (UT)</text>
<text x="260" y="797.8" font-family="Liberation Sans" font-size="20.3" fill="#000" font-weight="normal" text-anchor="start" textLength="72.3" lengthAdjust="spacingAndGlyphs" stroke="#000" stroke-width="0.45" >Set (UT)</text>
<rect x="3.2" y="805.4" width="124.1" height="35.60000000000002" fill="#ffffff" />
<rect x="3.2" y="805.4" width="122.1" height="33.60000000000002" fill="#a0a0a0" />
<rect x="5.2" y="807.4" width="120.1" height="31.600000000000023" fill="#696969" />
<rect x="7.2" y="809.4" width="118.1" height="29.600000000000023" fill="#d4d4d0" />
<rect x="5.2" y="837" width="120.1" height="2" fill="#e3e3e3" />
<rect x="123.3" y="807.4" width="2" height="31.600000000000023" fill="#e3e3e3" />
<rect x="7.2" y="809.4" width="116.1" height="27.600000000000023" fill="#d4d4d0" />
<rect x="129.4" y="805.4" width="124.1" height="35.60000000000002" fill="#ffffff" />
<rect x="129.4" y="805.4" width="122.1" height="33.60000000000002" fill="#a0a0a0" />
<rect x="131.4" y="807.4" width="120.1" height="31.600000000000023" fill="#696969" />
<rect x="133.4" y="809.4" width="118.1" height="29.600000000000023" fill="#d4d4d0" />
<rect x="131.4" y="837" width="120.1" height="2" fill="#e3e3e3" />
<rect x="249.5" y="807.4" width="2" height="31.600000000000023" fill="#e3e3e3" />
<rect x="133.4" y="809.4" width="116.1" height="27.600000000000023" fill="#d4d4d0" />
<rect x="255.7" y="805.4" width="124.0" height="35.60000000000002" fill="#ffffff" />
<rect x="255.7" y="805.4" width="122.0" height="33.60000000000002" fill="#a0a0a0" />
<rect x="257.7" y="807.4" width="120.0" height="31.600000000000023" fill="#696969" />
<rect x="259.7" y="809.4" width="118.0" height="29.600000000000023" fill="#d4d4d0" />
<rect x="257.7" y="837" width="120.0" height="2" fill="#e3e3e3" />
<rect x="375.7" y="807.4" width="2" height="31.600000000000023" fill="#e3e3e3" />
<rect x="259.7" y="809.4" width="116.0" height="27.600000000000023" fill="#d4d4d0" />
<text x="10.8" y="832.3" font-family="Liberation Sans" font-size="27" fill="#a01818" font-weight="normal" text-anchor="start" textLength="80.9" lengthAdjust="spacingAndGlyphs" stroke="#a01818" stroke-width="0.45" >17h31m</text>
<text x="137" y="832.3" font-family="Liberation Sans" font-size="27" fill="#a01818" font-weight="normal" text-anchor="start" textLength="79.8" lengthAdjust="spacingAndGlyphs" stroke="#a01818" stroke-width="0.45" >21h03m</text>
<text x="262.1" y="832.3" font-family="Liberation Sans" font-size="27" fill="#a01818" font-weight="normal" text-anchor="start" textLength="80.9" lengthAdjust="spacingAndGlyphs" stroke="#a01818" stroke-width="0.45" >00h39m</text>
<text x="8.6" y="862.5" font-family="Liberation Sans" font-size="20.3" fill="#6d6d6d" font-weight="normal" text-anchor="start" textLength="118.7" lengthAdjust="spacingAndGlyphs" stroke="#6d6d6d" stroke-width="0.45" >Constellation</text>
<text x="198.5" y="862.5" font-family="Liberation Sans" font-size="20.3" fill="#6d6d6d" font-weight="normal" text-anchor="start" textLength="80.9" lengthAdjust="spacingAndGlyphs" stroke="#6d6d6d" stroke-width="0.45" >Size / Incl</text>
<rect x="3.2" y="870" width="186.70000000000002" height="37" fill="#ffffff" />
<rect x="3.2" y="870" width="184.70000000000002" height="35" fill="#a0a0a0" />
<rect x="5.2" y="872" width="182.70000000000002" height="33" fill="#696969" />
<rect x="7.2" y="874" width="180.70000000000002" height="31" fill="#f0f0f0" />
<rect x="5.2" y="903" width="182.70000000000002" height="2" fill="#e3e3e3" />
<rect x="185.9" y="872" width="2" height="33" fill="#e3e3e3" />
<rect x="7.2" y="874" width="178.70000000000002" height="29" fill="#f0f0f0" />
<rect x="194.2" y="870" width="185.5" height="37" fill="#ffffff" />
<rect x="194.2" y="870" width="183.5" height="35" fill="#a0a0a0" />
<rect x="196.2" y="872" width="181.5" height="33" fill="#696969" />
<rect x="198.2" y="874" width="179.5" height="31" fill="#f0f0f0" />
<rect x="196.2" y="903" width="181.5" height="2" fill="#e3e3e3" />
<rect x="375.7" y="872" width="2" height="33" fill="#e3e3e3" />
<rect x="198.2" y="874" width="177.5" height="29" fill="#f0f0f0" />
<text x="8.6" y="929.6" font-family="Liberation Sans" font-size="20.3" fill="#6d6d6d" font-weight="normal" text-anchor="start" textLength="52.9" lengthAdjust="spacingAndGlyphs" stroke="#6d6d6d" stroke-width="0.45" >Name</text>
<text x="198.5" y="929.6" font-family="Liberation Sans" font-size="20.3" fill="#6d6d6d" font-weight="normal" text-anchor="start" textLength="49.6" lengthAdjust="spacingAndGlyphs" stroke="#6d6d6d" stroke-width="0.45" >Bayer</text>
<rect x="3.2" y="936" width="186.70000000000002" height="36.799999999999955" fill="#ffffff" />
<rect x="3.2" y="936" width="184.70000000000002" height="34.799999999999955" fill="#a0a0a0" />
<rect x="5.2" y="938" width="182.70000000000002" height="32.799999999999955" fill="#696969" />
<rect x="7.2" y="940" width="180.70000000000002" height="30.799999999999955" fill="#f0f0f0" />
<rect x="5.2" y="968.8" width="182.70000000000002" height="2" fill="#e3e3e3" />
<rect x="185.9" y="938" width="2" height="32.799999999999955" fill="#e3e3e3" />
<rect x="7.2" y="940" width="178.70000000000002" height="28.799999999999955" fill="#f0f0f0" />
<rect x="194.2" y="936" width="185.5" height="36.799999999999955" fill="#ffffff" />
<rect x="194.2" y="936" width="183.5" height="34.799999999999955" fill="#a0a0a0" />
<rect x="196.2" y="938" width="181.5" height="32.799999999999955" fill="#696969" />
<rect x="198.2" y="940" width="179.5" height="30.799999999999955" fill="#f0f0f0" />
<rect x="196.2" y="968.8" width="181.5" height="2" fill="#e3e3e3" />
<rect x="375.7" y="938" width="2" height="32.799999999999955" fill="#e3e3e3" />
<rect x="198.2" y="940" width="177.5" height="28.799999999999955" fill="#f0f0f0" />
<text x="8.6" y="995.4" font-family="Liberation Sans" font-size="20.3" fill="#6d6d6d" font-weight="normal" text-anchor="start" textLength="92.8" lengthAdjust="spacingAndGlyphs" stroke="#6d6d6d" stroke-width="0.45" >Flamsteed</text>
<text x="198.5" y="995.4" font-family="Liberation Sans" font-size="20.3" fill="#6d6d6d" font-weight="normal" text-anchor="start" textLength="101.4" lengthAdjust="spacingAndGlyphs" stroke="#6d6d6d" stroke-width="0.45" >Description</text>
<rect x="3.2" y="1004" width="186.70000000000002" height="36.700000000000045" fill="#ffffff" />
<rect x="3.2" y="1004" width="184.70000000000002" height="34.700000000000045" fill="#a0a0a0" />
<rect x="5.2" y="1006" width="182.70000000000002" height="32.700000000000045" fill="#696969" />
<rect x="7.2" y="1008" width="180.70000000000002" height="30.700000000000045" fill="#f0f0f0" />
<rect x="5.2" y="1036.7" width="182.70000000000002" height="2" fill="#e3e3e3" />
<rect x="185.9" y="1006" width="2" height="32.700000000000045" fill="#e3e3e3" />
<rect x="7.2" y="1008" width="178.70000000000002" height="28.700000000000045" fill="#f0f0f0" />
<rect x="194.2" y="1004" width="185.5" height="36.700000000000045" fill="#ffffff" />
<rect x="194.2" y="1004" width="183.5" height="34.700000000000045" fill="#a0a0a0" />
<rect x="196.2" y="1006" width="181.5" height="32.700000000000045" fill="#696969" />
<rect x="198.2" y="1008" width="179.5" height="30.700000000000045" fill="#f0f0f0" />
<rect x="196.2" y="1036.7" width="181.5" height="2" fill="#e3e3e3" />
<rect x="375.7" y="1006" width="2" height="32.700000000000045" fill="#e3e3e3" />
<rect x="198.2" y="1008" width="177.5" height="28.700000000000045" fill="#f0f0f0" />
<text x="6.5" y="1062.3" font-family="Liberation Sans" font-size="20.3" fill="#6d6d6d" font-weight="normal" text-anchor="start" textLength="170.4" lengthAdjust="spacingAndGlyphs" stroke="#6d6d6d" stroke-width="0.45" >Other Designations</text>
<rect x="2.2" y="1069.9" width="375.40000000000003" height="37.69999999999982" fill="#ffffff" />
<rect x="2.2" y="1069.9" width="373.40000000000003" height="35.69999999999982" fill="#a0a0a0" />
<rect x="4.2" y="1071.9" width="371.40000000000003" height="33.69999999999982" fill="#696969" />
<rect x="6.2" y="1073.9" width="369.40000000000003" height="31.699999999999818" fill="#f0f0f0" />
<rect x="4.2" y="1103.6" width="371.40000000000003" height="2" fill="#e3e3e3" />
<rect x="373.6" y="1071.9" width="2" height="33.69999999999982" fill="#e3e3e3" />
<rect x="6.2" y="1073.9" width="367.40000000000003" height="29.699999999999818" fill="#f0f0f0" />
<text x="8.6" y="1128.1" font-family="Liberation Sans" font-size="20.3" fill="#6d6d6d" font-weight="normal" text-anchor="start" textLength="56.1" lengthAdjust="spacingAndGlyphs" stroke="#6d6d6d" stroke-width="0.45" >Lumin.</text>
<text x="78.7" y="1128.1" font-family="Liberation Sans" font-size="20.3" fill="#6d6d6d" font-weight="normal" text-anchor="start" textLength="77.7" lengthAdjust="spacingAndGlyphs" stroke="#6d6d6d" stroke-width="0.45" >Distance</text>
<text x="228.7" y="1128.1" font-family="Liberation Sans" font-size="20.3" fill="#6d6d6d" font-weight="normal" text-anchor="start" textLength="38.8" lengthAdjust="spacingAndGlyphs" stroke="#6d6d6d" stroke-width="0.45" >DST</text>
<text x="309.6" y="1128.1" font-family="Liberation Sans" font-size="20.3" fill="#6d6d6d" font-weight="normal" text-anchor="start" textLength="38.8" lengthAdjust="spacingAndGlyphs" stroke="#6d6d6d" stroke-width="0.45" >DSF</text>
<rect x="3.2" y="1136.7" width="65.8" height="36.700000000000045" fill="#ffffff" />
<rect x="3.2" y="1136.7" width="63.8" height="34.700000000000045" fill="#a0a0a0" />
<rect x="5.2" y="1138.7" width="61.8" height="32.700000000000045" fill="#696969" />
<rect x="7.2" y="1140.7" width="59.8" height="30.700000000000045" fill="#f0f0f0" />
<rect x="5.2" y="1169.4" width="61.8" height="2" fill="#e3e3e3" />
<rect x="65" y="1138.7" width="2" height="32.700000000000045" fill="#e3e3e3" />
<rect x="7.2" y="1140.7" width="57.8" height="28.700000000000045" fill="#f0f0f0" />
<rect x="73.4" y="1136.7" width="143.4" height="36.700000000000045" fill="#ffffff" />
<rect x="73.4" y="1136.7" width="141.4" height="34.700000000000045" fill="#a0a0a0" />
<rect x="75.4" y="1138.7" width="139.4" height="32.700000000000045" fill="#696969" />
<rect x="77.4" y="1140.7" width="137.4" height="30.700000000000045" fill="#f0f0f0" />
<rect x="75.4" y="1169.4" width="139.4" height="2" fill="#e3e3e3" />
<rect x="212.8" y="1138.7" width="2" height="32.700000000000045" fill="#e3e3e3" />
<rect x="77.4" y="1140.7" width="135.4" height="28.700000000000045" fill="#f0f0f0" />
<rect x="222.2" y="1136.7" width="76.60000000000002" height="36.700000000000045" fill="#ffffff" />
<rect x="222.2" y="1136.7" width="74.60000000000002" height="34.700000000000045" fill="#a0a0a0" />
<rect x="224.2" y="1138.7" width="72.60000000000002" height="32.700000000000045" fill="#696969" />
<rect x="226.2" y="1140.7" width="70.60000000000002" height="30.700000000000045" fill="#f0f0f0" />
<rect x="224.2" y="1169.4" width="72.60000000000002" height="2" fill="#e3e3e3" />
<rect x="294.8" y="1138.7" width="2" height="32.700000000000045" fill="#e3e3e3" />
<rect x="226.2" y="1140.7" width="68.60000000000002" height="28.700000000000045" fill="#f0f0f0" />
<rect x="303.1" y="1136.7" width="72.29999999999995" height="36.700000000000045" fill="#ffffff" />
<rect x="303.1" y="1136.7" width="70.29999999999995" height="34.700000000000045" fill="#a0a0a0" />
<rect x="305.1" y="1138.7" width="68.29999999999995" height="32.700000000000045" fill="#696969" />
<rect x="307.1" y="1140.7" width="66.29999999999995" height="30.700000000000045" fill="#f0f0f0" />
<rect x="305.1" y="1169.4" width="68.29999999999995" height="2" fill="#e3e3e3" />
<rect x="371.4" y="1138.7" width="2" height="32.700000000000045" fill="#e3e3e3" />
<rect x="307.1" y="1140.7" width="64.29999999999995" height="28.700000000000045" fill="#f0f0f0" />
<text x="8.6" y="1193.9" font-family="Liberation Sans" font-size="20.3" fill="#000" font-weight="normal" text-anchor="start" textLength="56.1" lengthAdjust="spacingAndGlyphs" stroke="#000" stroke-width="0.45" >V Mag</text>
<text x="78.7" y="1193.9" font-family="Liberation Sans" font-size="20.3" fill="#000" font-weight="normal" text-anchor="start" textLength="59.4" lengthAdjust="spacingAndGlyphs" stroke="#000" stroke-width="0.45" >B Mag</text>
<text x="151" y="1193.9" font-family="Liberation Sans" font-size="20.3" fill="#8a8a8a" font-weight="normal" text-anchor="start" textLength="59.4" lengthAdjust="spacingAndGlyphs" stroke="#8a8a8a" stroke-width="0.45" >Surf.B.</text>
<text x="224.4" y="1193.9" font-family="Liberation Sans" font-size="20.3" fill="#000" font-weight="normal" text-anchor="start" textLength="63.6" lengthAdjust="spacingAndGlyphs" stroke="#000" stroke-width="0.45" >RA Err.</text>
<text x="305.3" y="1193.9" font-family="Liberation Sans" font-size="20.3" fill="#000" font-weight="normal" text-anchor="start" textLength="61.5" lengthAdjust="spacingAndGlyphs" stroke="#000" stroke-width="0.45" >DE Err.</text>
<rect x="3.2" y="1203.6" width="65.8" height="35.200000000000045" fill="#ffffff" />
<rect x="3.2" y="1203.6" width="63.8" height="33.200000000000045" fill="#a0a0a0" />
<rect x="5.2" y="1205.6" width="61.8" height="31.200000000000045" fill="#696969" />
<rect x="7.2" y="1207.6" width="59.8" height="29.200000000000045" fill="#d0d0ff" />
<rect x="5.2" y="1234.8" width="61.8" height="2" fill="#e3e3e3" />
<rect x="65" y="1205.6" width="2" height="31.200000000000045" fill="#e3e3e3" />
<rect x="7.2" y="1207.6" width="57.8" height="27.200000000000045" fill="#d0d0ff" />
<rect x="74.4" y="1203.6" width="64.79999999999998" height="35.200000000000045" fill="#ffffff" />
<rect x="74.4" y="1203.6" width="62.79999999999998" height="33.200000000000045" fill="#a0a0a0" />
<rect x="76.4" y="1205.6" width="60.79999999999998" height="31.200000000000045" fill="#696969" />
<rect x="78.4" y="1207.6" width="58.79999999999998" height="29.200000000000045" fill="#d0d0ff" />
<rect x="76.4" y="1234.8" width="60.79999999999998" height="2" fill="#e3e3e3" />
<rect x="135.2" y="1205.6" width="2" height="31.200000000000045" fill="#e3e3e3" />
<rect x="78.4" y="1207.6" width="56.79999999999998" height="27.200000000000045" fill="#d0d0ff" />
<rect x="145.6" y="1203.6" width="66.9" height="35.200000000000045" fill="#ffffff" />
<rect x="145.6" y="1203.6" width="64.9" height="33.200000000000045" fill="#a0a0a0" />
<rect x="147.6" y="1205.6" width="62.900000000000006" height="31.200000000000045" fill="#696969" />
<rect x="149.6" y="1207.6" width="60.900000000000006" height="29.200000000000045" fill="#f0f0f0" />
<rect x="147.6" y="1234.8" width="62.900000000000006" height="2" fill="#e3e3e3" />
<rect x="208.5" y="1205.6" width="2" height="31.200000000000045" fill="#e3e3e3" />
<rect x="149.6" y="1207.6" width="58.900000000000006" height="27.200000000000045" fill="#f0f0f0" />
<rect x="219" y="1203.6" width="74.39999999999998" height="35.200000000000045" fill="#ffffff" />
<rect x="219" y="1203.6" width="72.39999999999998" height="33.200000000000045" fill="#a0a0a0" />
<rect x="221" y="1205.6" width="70.39999999999998" height="31.200000000000045" fill="#696969" />
<rect x="223" y="1207.6" width="68.39999999999998" height="29.200000000000045" fill="#d0d0ff" />
<rect x="221" y="1234.8" width="70.39999999999998" height="2" fill="#e3e3e3" />
<rect x="289.4" y="1205.6" width="2" height="31.200000000000045" fill="#e3e3e3" />
<rect x="223" y="1207.6" width="66.39999999999998" height="27.200000000000045" fill="#d0d0ff" />
<rect x="299.9" y="1203.6" width="75.5" height="35.200000000000045" fill="#ffffff" />
<rect x="299.9" y="1203.6" width="73.5" height="33.200000000000045" fill="#a0a0a0" />
<rect x="301.9" y="1205.6" width="71.5" height="31.200000000000045" fill="#696969" />
<rect x="303.9" y="1207.6" width="69.5" height="29.200000000000045" fill="#d0d0ff" />
<rect x="301.9" y="1234.8" width="71.5" height="2" fill="#e3e3e3" />
<rect x="371.4" y="1205.6" width="2" height="31.200000000000045" fill="#e3e3e3" />
<rect x="303.9" y="1207.6" width="67.5" height="27.200000000000045" fill="#d0d0ff" />
<text x="9.7" y="1230.6" font-family="Liberation Sans" font-size="27" fill="#000" font-weight="normal" text-anchor="start" textLength="57.2" lengthAdjust="spacingAndGlyphs" stroke="#000" stroke-width="0.45" >9.884</text>
<text x="79.8" y="1230.6" font-family="Liberation Sans" font-size="27" fill="#000" font-weight="normal" text-anchor="start" textLength="58.3" lengthAdjust="spacingAndGlyphs" stroke="#000" stroke-width="0.45" >10.24</text>
<text x="222.2" y="1230.6" font-family="Liberation Sans" font-size="27" fill="#000" font-weight="normal" text-anchor="start" textLength="48.6" lengthAdjust="spacingAndGlyphs" stroke="#000" stroke-width="0.45" >16.3</text>
<text x="304.2" y="1230.6" font-family="Liberation Sans" font-size="27" fill="#000" font-weight="normal" text-anchor="start" textLength="47.5" lengthAdjust="spacingAndGlyphs" stroke="#000" stroke-width="0.45" >19.6</text>
<text x="7.8" y="1260.8" font-family="Liberation Sans" font-size="20.3" fill="#000" font-weight="normal" text-anchor="start" textLength="61.3" lengthAdjust="spacingAndGlyphs" stroke="#000" stroke-width="0.45" >RA pm</text>
<text x="103.6" y="1260.8" font-family="Liberation Sans" font-size="20.3" fill="#000" font-weight="normal" text-anchor="start" textLength="59.7" lengthAdjust="spacingAndGlyphs" stroke="#000" stroke-width="0.45" >DE pm</text>
<text x="202.5" y="1260.8" font-family="Liberation Sans" font-size="20.3" fill="#000" font-weight="normal" text-anchor="start" textLength="84.8" lengthAdjust="spacingAndGlyphs" stroke="#000" stroke-width="0.45" >Er RA pm</text>
<text x="299.8" y="1260.8" font-family="Liberation Sans" font-size="20.3" fill="#000" font-weight="normal" text-anchor="start" textLength="83.2" lengthAdjust="spacingAndGlyphs" stroke="#000" stroke-width="0.45" >Er DE pm</text>
<rect x="4.7" y="1270.2" width="91.1" height="36.09999999999991" fill="#ffffff" />
<rect x="4.7" y="1270.2" width="89.1" height="34.09999999999991" fill="#a0a0a0" />
<rect x="6.7" y="1272.2" width="87.1" height="32.09999999999991" fill="#696969" />
<rect x="8.7" y="1274.2" width="85.1" height="30.09999999999991" fill="#d0d0ff" />
<rect x="6.7" y="1302.3" width="87.1" height="2" fill="#e3e3e3" />
<rect x="91.8" y="1272.2" width="2" height="32.09999999999991" fill="#e3e3e3" />
<rect x="8.7" y="1274.2" width="83.1" height="28.09999999999991" fill="#d0d0ff" />
<rect x="100.5" y="1270.2" width="91.0" height="36.09999999999991" fill="#ffffff" />
<rect x="100.5" y="1270.2" width="89.0" height="34.09999999999991" fill="#a0a0a0" />
<rect x="102.5" y="1272.2" width="87.0" height="32.09999999999991" fill="#696969" />
<rect x="104.5" y="1274.2" width="85.0" height="30.09999999999991" fill="#d0d0ff" />
<rect x="102.5" y="1302.3" width="87.0" height="2" fill="#e3e3e3" />
<rect x="187.5" y="1272.2" width="2" height="32.09999999999991" fill="#e3e3e3" />
<rect x="104.5" y="1274.2" width="83.0" height="28.09999999999991" fill="#d0d0ff" />
<rect x="197.8" y="1270.2" width="92.59999999999997" height="36.09999999999991" fill="#ffffff" />
<rect x="197.8" y="1270.2" width="90.59999999999997" height="34.09999999999991" fill="#a0a0a0" />
<rect x="199.8" y="1272.2" width="88.59999999999997" height="32.09999999999991" fill="#696969" />
<rect x="201.8" y="1274.2" width="86.59999999999997" height="30.09999999999991" fill="#d0d0ff" />
<rect x="199.8" y="1302.3" width="88.59999999999997" height="2" fill="#e3e3e3" />
<rect x="286.4" y="1272.2" width="2" height="32.09999999999991" fill="#e3e3e3" />
<rect x="201.8" y="1274.2" width="84.59999999999997" height="28.09999999999991" fill="#d0d0ff" />
<rect x="296.7" y="1270.2" width="83.19999999999999" height="36.09999999999991" fill="#ffffff" />
<rect x="296.7" y="1270.2" width="81.19999999999999" height="34.09999999999991" fill="#a0a0a0" />
<rect x="298.7" y="1272.2" width="79.19999999999999" height="32.09999999999991" fill="#696969" />
<rect x="300.7" y="1274.2" width="77.19999999999999" height="30.09999999999991" fill="#d0d0ff" />
<rect x="298.7" y="1302.3" width="79.19999999999999" height="2" fill="#e3e3e3" />
<rect x="375.9" y="1272.2" width="2" height="32.09999999999991" fill="#e3e3e3" />
<rect x="300.7" y="1274.2" width="75.19999999999999" height="28.09999999999991" fill="#d0d0ff" />
<text x="9.4" y="1296.9" font-family="Liberation Sans" font-size="27" fill="#000" font-weight="normal" text-anchor="start" textLength="51.8" lengthAdjust="spacingAndGlyphs" stroke="#000" stroke-width="0.45" >-12.3</text>
<text x="105.2" y="1296.9" font-family="Liberation Sans" font-size="27" fill="#000" font-weight="normal" text-anchor="start" textLength="39.2" lengthAdjust="spacingAndGlyphs" stroke="#000" stroke-width="0.45" >-1.7</text>
<text x="204.1" y="1296.9" font-family="Liberation Sans" font-size="27" fill="#000" font-weight="normal" text-anchor="start" textLength="31.4" lengthAdjust="spacingAndGlyphs" stroke="#000" stroke-width="0.45" >1.7</text>
<text x="303" y="1296.9" font-family="Liberation Sans" font-size="27" fill="#000" font-weight="normal" text-anchor="start" textLength="33" lengthAdjust="spacingAndGlyphs" stroke="#000" stroke-width="0.45" >1.9</text>
<text x="7.8" y="1326.8" font-family="Liberation Sans" font-size="20.3" fill="#000" font-weight="normal" text-anchor="start" textLength="155.5" lengthAdjust="spacingAndGlyphs" stroke="#000" stroke-width="0.45" >Other Information</text>
<rect x="3.1" y="1336.2" width="376.79999999999995" height="152.20000000000005" fill="#ffffff" />
<rect x="3.1" y="1336.2" width="374.79999999999995" height="150.20000000000005" fill="#a0a0a0" />
<rect x="5.1" y="1338.2" width="372.79999999999995" height="148.20000000000005" fill="#696969" />
<rect x="7.1" y="1340.2" width="370.79999999999995" height="146.20000000000005" fill="#d0d0ff" />
<rect x="5.1" y="1484.4" width="372.79999999999995" height="2" fill="#e3e3e3" />
<rect x="375.9" y="1338.2" width="2" height="148.20000000000005" fill="#e3e3e3" />
<rect x="7.1" y="1340.2" width="368.79999999999995" height="144.20000000000005" fill="#d0d0ff" />
<rect x="342.2" y="1340" width="35" height="145" fill="#f0f0f0" />
<rect x="344" y="1375.4" width="32" height="36" fill="#cdcdcd" />
<path d="M353 1363 L360 1356 L367 1363" stroke="#606060" stroke-width="2.5" fill="none"/>
<path d="M353 1466 L360 1473 L367 1466" stroke="#606060" stroke-width="2.5" fill="none"/>
<text x="11" y="1359.7" font-family="Liberation Sans" font-size="18.3" fill="#000" font-weight="normal" text-anchor="start" textLength="251.2" lengthAdjust="spacingAndGlyphs" stroke="#000" stroke-width="0.45" >RA (eq. date):  11h 51m 24.54s</text>
<text x="11" y="1383.3" font-family="Liberation Sans" font-size="18.3" fill="#000" font-weight="normal" text-anchor="start" textLength="238.6" lengthAdjust="spacingAndGlyphs" stroke="#000" stroke-width="0.45" >DE (eq. date):  -29° 45' 32.11''</text>
<text x="11" y="1406.8" font-family="Liberation Sans" font-size="18.3" fill="#000" font-weight="normal" text-anchor="start" textLength="273.1" lengthAdjust="spacingAndGlyphs" stroke="#000" stroke-width="0.45" >Normal mean position &amp; proper</text>
<text x="11" y="1430.4" font-family="Liberation Sans" font-size="18.3" fill="#000" font-weight="normal" text-anchor="start" textLength="62.8" lengthAdjust="spacingAndGlyphs" stroke="#000" stroke-width="0.45" >motion</text>
<text x="11" y="1453.9" font-family="Liberation Sans" font-size="18.3" fill="#000" font-weight="normal" text-anchor="start" textLength="274.7" lengthAdjust="spacingAndGlyphs" stroke="#000" stroke-width="0.45" >Mean RA J2000: 11h 50m 22.71s</text>
<text x="11" y="1477.5" font-family="Liberation Sans" font-size="18.3" fill="#000" font-weight="normal" text-anchor="start" textLength="270" lengthAdjust="spacingAndGlyphs" stroke="#000" stroke-width="0.45" >Mean DE J2000: -29° 38' 45.33''</text>
<rect x="385.5" y="210.3" width="1922" height="1484" fill="#a0a0a0" />
<rect x="387.5" y="212.3" width="1920" height="1482" fill="#696969" />
<rect x="389" y="215.6" width="1916.5" height="1477.4" fill="#000000" />
<defs><clipPath id="mc"><rect x="398.6" y="222.8" width="1897.4" height="1466.2"/></clipPath></defs>
<g clip-path="url(#mc)">
<line x1="163.3" y1="222" x2="521" y2="1690" stroke="#6c6c6c" stroke-width="2.1" />
<line x1="359.8" y1="222" x2="707" y2="1690" stroke="#6c6c6c" stroke-width="2.1" />
<line x1="556" y1="222" x2="895" y2="1690" stroke="#6c6c6c" stroke-width="2.1" />
<line x1="739" y1="222" x2="1082" y2="1690" stroke="#6c6c6c" stroke-width="2.1" />
<line x1="926" y1="222" x2="1271" y2="1690" stroke="#6c6c6c" stroke-width="2.1" />
<line x1="1113.5" y1="222" x2="1459" y2="1690" stroke="#6c6c6c" stroke-width="2.1" />
<line x1="1302" y1="222" x2="1645" y2="1690" stroke="#6c6c6c" stroke-width="2.1" />
<line x1="1492" y1="222" x2="1833" y2="1690" stroke="#6c6c6c" stroke-width="2.1" />
<line x1="1681" y1="222" x2="2021" y2="1690" stroke="#6c6c6c" stroke-width="2.1" />
<line x1="1868.5" y1="222" x2="2209" y2="1690" stroke="#6c6c6c" stroke-width="2.1" />
<line x1="2056" y1="222" x2="2396" y2="1690" stroke="#6c6c6c" stroke-width="2.1" />
<line x1="2244" y1="222" x2="2584" y2="1690" stroke="#6c6c6c" stroke-width="2.1" />
<line x1="397" y1="327.0" x2="2298" y2="-116.0" stroke="#6c6c6c" stroke-width="2.1" />
<line x1="397" y1="518.6" x2="2298" y2="75.4" stroke="#6c6c6c" stroke-width="2.1" />
<line x1="397" y1="710.2" x2="2298" y2="266.8" stroke="#6c6c6c" stroke-width="2.1" />
<line x1="397" y1="901.8" x2="2298" y2="458.20000000000005" stroke="#6c6c6c" stroke-width="2.1" />
<line x1="397" y1="1093.4" x2="2298" y2="649.6" stroke="#6c6c6c" stroke-width="2.1" />
<line x1="397" y1="1285.0" x2="2298" y2="841.0" stroke="#6c6c6c" stroke-width="2.1" />
<line x1="397" y1="1476.6" x2="2298" y2="1032.4" stroke="#6c6c6c" stroke-width="2.1" />
<line x1="397" y1="1668.2" x2="2298" y2="1223.8" stroke="#6c6c6c" stroke-width="2.1" />
<line x1="397" y1="1859.8" x2="2298" y2="1415.2" stroke="#6c6c6c" stroke-width="2.1" />
<line x1="397" y1="2051.3999999999996" x2="2298" y2="1606.6000000000001" stroke="#6c6c6c" stroke-width="2.1" />
<circle cx="1348" cy="955.7" r="949.6" fill="none" stroke="#780078" stroke-width="2"/>
<rect x="747" y="582.2" width="1200.2" height="747.6" fill="none" stroke="#cc6a12" stroke-width="3"/>
<rect x="461.6" y="300.7" width="7" height="7" fill="#ffff00" />
<rect x="577.5" y="420.5" width="7" height="7" fill="#ffff00" />
<circle cx="729" cy="411.3" r="5.0" fill="#ffff00"/>
<rect x="1102.5" y="380.0" width="7" height="7" fill="#ffff00" />
<rect x="1294.5" y="392.8" width="7" height="7" fill="#ffff00" />
<rect x="901.6" y="482.2" width="7" height="7" fill="#ffff00" />
<rect x="425.1" y="516.5" width="7" height="7" fill="#ffff00" />
<ellipse cx="744.8" cy="563.7" rx="5.5" ry="4" fill="#ffff00"/>
<rect x="835.5" y="563.7" width="7" height="7" fill="#ffff00" />
<circle cx="1086.6" cy="562.8" r="7.5" fill="#ffff00"/>
<rect x="487.2" y="584.8" width="7" height="7" fill="#ffff00" />
<rect x="472.5" y="633.9" width="3" height="3" fill="#b0b000" />
<circle cx="445.8" cy="673.8" r="6.0" fill="#ffff00"/>
<circle cx="470.4" cy="685.2" r="9.0" fill="#ffff00"/>
<rect x="508.3" y="687.0" width="7" height="7" fill="#ffff00" />
<rect x="538.7" y="659.7" width="7" height="7" fill="#ffff00" />
<rect x="647.5" y="646.9" width="7" height="7" fill="#ffff00" />
<circle cx="750.1" cy="637.2" r="5.0" fill="#ffff00"/>
<circle cx="1014.8" cy="678.2" r="5.0" fill="#ffff00"/>
<rect x="1298.9" y="695.8" width="7" height="7" fill="#ffff00" />
<rect x="1322.1" y="676.7" width="3" height="3" fill="#b0b000" />
<rect x="681.4" y="736.3" width="7" height="7" fill="#ffff00" />
<rect x="805.5" y="734.4" width="3" height="3" fill="#b0b000" />
<rect x="429.3" y="757.7" width="3" height="3" fill="#b0b000" />
<rect x="901.5" y="813.2" width="3" height="3" fill="#b0b000" />
<rect x="719.7" y="847.8" width="7" height="7" fill="#ffff00" />
<rect x="664.5" y="236.2" width="3" height="3" fill="#b0b000" />
<rect x="807.2" y="253.5" width="3" height="3" fill="#b0b000" />
<rect x="1160.0" y="271.0" width="3" height="3" fill="#b0b000" />
<rect x="1162.2" y="526.9" width="3" height="3" fill="#b0b000" />
<circle cx="1598.4" cy="318.3" r="4.0" fill="#ffff00"/>
<circle cx="1658.3" cy="328" r="5.0" fill="#ffff00"/>
<rect x="1672.8" y="309.5" width="7" height="7" fill="#ffff00" />
<circle cx="1776.8" cy="396.4" r="10.0" fill="#ffff00"/>
<rect x="1971.7" y="415.9" width="3" height="3" fill="#b0b000" />
<circle cx="2204.9" cy="419.6" r="5.0" fill="#ffff00"/>
<rect x="2091.3" y="315.7" width="7" height="7" fill="#ffff00" />
<circle cx="2121.6" cy="465.9" r="4.0" fill="#ffff00"/>
<circle cx="1951.6" cy="489.2" r="9.0" fill="#ffff00"/>
<rect x="1579.0" y="467.2" width="7" height="7" fill="#ffff00" />
<circle cx="1386.5" cy="488.8" r="4.0" fill="#ffff00"/>
<rect x="1433.7" y="499.4" width="7" height="7" fill="#ffff00" />
<rect x="1674.6" y="578.7" width="7" height="7" fill="#ffff00" />
<rect x="2078.5" y="597.6" width="7" height="7" fill="#ffff00" />
<rect x="1638.5" y="621.0" width="7" height="7" fill="#ffff00" />
<rect x="1418.5" y="624.7" width="3" height="3" fill="#b0b000" />
<rect x="1373.3" y="644.7" width="7" height="7" fill="#ffff00" />
<rect x="1706.5" y="648.5" width="3" height="3" fill="#b0b000" />
<rect x="1946.4" y="642.5" width="7" height="7" fill="#ffff00" />
<ellipse cx="1994.3" cy="690.1" rx="5.5" ry="4" fill="#ffff00"/>
<circle cx="2019" cy="715.6" r="4.0" fill="#ffff00"/>
<rect x="1690.0" y="708.6" width="7" height="7" fill="#ffff00" />
<rect x="1884.3" y="764.5" width="7" height="7" fill="#ffff00" />
<circle cx="1734.9" cy="777.3" r="4.0" fill="#ffff00"/>
<rect x="1830.8" y="813.2" width="3" height="3" fill="#b0b000" />
<rect x="2180.5" y="675.8" width="3" height="3" fill="#b0b000" />
<circle cx="2210.2" cy="820.9" r="7.0" fill="#ffff00"/>
<circle cx="1983.3" cy="861.9" r="11.0" fill="#ffff00"/>
<circle cx="1693.5" cy="882.6" r="6.5" fill="#ffff00"/>
<rect x="429.7" y="994.5" width="3" height="3" fill="#b0b000" />
<ellipse cx="723.2" cy="971.7" rx="5.5" ry="4" fill="#ffff00"/>
<circle cx="588.9" cy="1043.5" r="6.5" fill="#ffff00"/>
<rect x="910.0" y="996.9" width="7" height="7" fill="#ffff00" />
<ellipse cx="1279" cy="1032" rx="5.5" ry="4" fill="#ffff00"/>
<rect x="1014.8" y="1069.5" width="7" height="7" fill="#ffff00" />
<rect x="523.3" y="1120.6" width="7" height="7" fill="#ffff00" />
<rect x="604.3" y="1131.6" width="7" height="7" fill="#ffff00" />
<circle cx="687.1" cy="1199.4" r="6.5" fill="#ffff00"/>
<rect x="788.5" y="1198.1" width="7" height="7" fill="#ffff00" />
<rect x="895.0" y="1187.1" width="7" height="7" fill="#ffff00" />
<rect x="942.2" y="1165.5" width="7" height="7" fill="#ffff00" />
<rect x="984.9" y="1202.1" width="7" height="7" fill="#ffff00" />
<rect x="1047.0" y="1202.1" width="7" height="7" fill="#ffff00" />
<ellipse cx="1088.8" cy="1164.2" rx="5.5" ry="4" fill="#ffff00"/>
<rect x="946.4" y="1216.9" width="3" height="3" fill="#b0b000" />
<circle cx="1336.3" cy="1201.6" r="6.5" fill="#ffff00"/>
<rect x="1226.2" y="1212.7" width="7" height="7" fill="#ffff00" />
<circle cx="860.2" cy="1247.9" r="7.5" fill="#ffff00"/>
<circle cx="1142.1" cy="1246.1" r="7.5" fill="#ffff00"/>
<rect x="690.2" y="1264.2" width="7" height="7" fill="#ffff00" />
<rect x="811.8" y="1287.5" width="7" height="7" fill="#ffff00" />
<rect x="925.0" y="1292.0" width="7" height="7" fill="#ffff00" />
<circle cx="684.9" cy="1317" r="7.0" fill="#ffff00"/>
<rect x="843.9" y="1326.3" width="7" height="7" fill="#ffff00" />
<ellipse cx="559" cy="1356.2" rx="5.5" ry="4" fill="#ffff00"/>
<rect x="600.4" y="1370.8" width="7" height="7" fill="#ffff00" />
<rect x="892.8" y="1362.4" width="7" height="7" fill="#ffff00" />
<ellipse cx="969" cy="1365" rx="5.5" ry="4" fill="#ffff00"/>
<rect x="946.5" y="1390.2" width="7" height="7" fill="#ffff00" />
<rect x="1158.0" y="1450.1" width="7" height="7" fill="#ffff00" />
<circle cx="1320" cy="1453.6" r="4.5" fill="#ffff00"/>
<circle cx="1237.2" cy="1470.3" r="4.5" fill="#ffff00"/>
<rect x="1234.6" y="1541.7" width="7" height="7" fill="#ffff00" />
<circle cx="1317.4" cy="1586.1" r="9.0" fill="#ffff00"/>
<rect x="536.1" y="1543.9" width="7" height="7" fill="#ffff00" />
<rect x="690.2" y="1565.0" width="7" height="7" fill="#ffff00" />
<rect x="959.1" y="1608.0" width="3" height="3" fill="#b0b000" />
<circle cx="451" cy="1622.3" r="10.0" fill="#ffff00"/>
<circle cx="499.1" cy="1656.6" r="5.0" fill="#ffff00"/>
<circle cx="1302.4" cy="1637.2" r="5.0" fill="#ffff00"/>
<rect x="1736.7" y="1052.8" width="7" height="7" fill="#ffff00" />
<rect x="1721.7" y="1082.3" width="7" height="7" fill="#ffff00" />
<rect x="1597.8" y="1099.3" width="3" height="3" fill="#b0b000" />
<rect x="1973.7" y="1084.5" width="7" height="7" fill="#ffff00" />
<rect x="1952.5" y="1148.8" width="7" height="7" fill="#ffff00" />
<rect x="2257.8" y="1091.5" width="7" height="7" fill="#ffff00" />
<circle cx="2226" cy="1219.7" r="8.5" fill="#ffff00"/>
<rect x="2091.3" y="1300.3" width="7" height="7" fill="#ffff00" />
<circle cx="2184.6" cy="1363.7" r="7.0" fill="#ffff00"/>
<rect x="2097.7" y="1386.0" width="3" height="3" fill="#b0b000" />
<rect x="1514.7" y="1456.3" width="7" height="7" fill="#ffff00" />
<circle cx="1709.4" cy="1563.7" r="4.0" fill="#ffff00"/>
<circle cx="2065.7" cy="1624.5" r="8.5" fill="#ffff00"/>
<circle cx="1818.2" cy="1655.3" r="4.0" fill="#ffff00"/>
<rect x="1433.7" y="1684.9" width="7" height="7" fill="#ffff00" />
<rect x="1510.1" y="1336.7" width="3" height="3" fill="#b0b000" />
<g fill="#ffff00"><circle cx="1441.6" cy="1405.5" r="5"/><path d="M1434 1403 Q1441.6 1392 1449 1403 L1447 1404 Q1441.6 1398 1436 1404Z"/></g>
<ellipse cx="2051.6" cy="1339" rx="12.5" ry="7" fill="none" stroke="#e00000" stroke-width="2"/>
<rect x="856.4" y="247" width="65.80000000000007" height="25.5" fill="#000" stroke="#6a6a6a" stroke-width="2"/>
<text x="859.9" y="268.5" font-family="Liberation Sans" font-size="23" fill="#d0d050" font-weight="normal" text-anchor="start" textLength="60.8" lengthAdjust="spacingAndGlyphs" >10°20'</text>
<rect x="1612.6" y="247.5" width="68.0" height="24.5" fill="#000" stroke="#6a6a6a" stroke-width="2"/>
<text x="1616.1" y="268" font-family="Liberation Sans" font-size="23" fill="#d0d050" font-weight="normal" text-anchor="start" textLength="63.0" lengthAdjust="spacingAndGlyphs" >10°30'</text>
<rect x="2219" y="260.8" width="67.69999999999982" height="24.399999999999977" fill="#000" stroke="#6a6a6a" stroke-width="2"/>
<text x="2222.5" y="281.2" font-family="Liberation Sans" font-size="23" fill="#d0d050" font-weight="normal" text-anchor="start" textLength="62.7" lengthAdjust="spacingAndGlyphs" >10°40'</text>
<rect x="2232.3" y="464.2" width="70.69999999999982" height="24.5" fill="#000" stroke="#6a6a6a" stroke-width="2"/>
<text x="2235.8" y="484.7" font-family="Liberation Sans" font-size="23" fill="#d0d050" font-weight="normal" text-anchor="start" textLength="65.7" lengthAdjust="spacingAndGlyphs" >10°50'</text>
<rect x="2228.8" y="846.6" width="63.19999999999982" height="24.399999999999977" fill="#000" stroke="#6a6a6a" stroke-width="2"/>
<text x="2232.3" y="867" font-family="Liberation Sans" font-size="23" fill="#d0d050" font-weight="normal" text-anchor="start" textLength="58.2" lengthAdjust="spacingAndGlyphs" >11°10'</text>
<rect x="2222.2" y="1027.8" width="65.40000000000009" height="25.299999999999955" fill="#000" stroke="#6a6a6a" stroke-width="2"/>
<text x="2225.7" y="1049.1" font-family="Liberation Sans" font-size="23" fill="#d0d050" font-weight="normal" text-anchor="start" textLength="60.4" lengthAdjust="spacingAndGlyphs" >11°20'</text>
<rect x="2222.2" y="1231.7" width="65.40000000000009" height="25.299999999999955" fill="#000" stroke="#6a6a6a" stroke-width="2"/>
<text x="2225.7" y="1253" font-family="Liberation Sans" font-size="23" fill="#d0d050" font-weight="normal" text-anchor="start" textLength="60.4" lengthAdjust="spacingAndGlyphs" >11°30'</text>
<rect x="2222.2" y="1412.7" width="65.40000000000009" height="24.899999999999864" fill="#000" stroke="#6a6a6a" stroke-width="2"/>
<text x="2225.7" y="1433.6" font-family="Liberation Sans" font-size="23" fill="#d0d050" font-weight="normal" text-anchor="start" textLength="60.4" lengthAdjust="spacingAndGlyphs" >11°40'</text>
<rect x="2222.2" y="1593.3" width="65.40000000000009" height="24.90000000000009" fill="#000" stroke="#6a6a6a" stroke-width="2"/>
<text x="2225.7" y="1614.2" font-family="Liberation Sans" font-size="23" fill="#d0d050" font-weight="normal" text-anchor="start" textLength="60.4" lengthAdjust="spacingAndGlyphs" >11°50'</text>
<rect x="2244.6" y="335.6" width="48.30000000000018" height="24.399999999999977" fill="#000" stroke="#6a6a6a" stroke-width="2"/>
<text x="2248.1" y="356" font-family="Liberation Sans" font-size="23" fill="#c4c8cc" font-weight="normal" text-anchor="start" textLength="43.3" lengthAdjust="spacingAndGlyphs" >164°</text>
<rect x="2220" y="1105.8" width="83" height="23.5" fill="#000" stroke="#6a6a6a" stroke-width="2"/>
<text x="2223.5" y="1125.3" font-family="Liberation Sans" font-size="23" fill="#c4c8cc" font-weight="normal" text-anchor="start" textLength="78.0" lengthAdjust="spacingAndGlyphs" >163°50'</text>
<rect x="2145.1" y="1600" width="78.59999999999991" height="24.40000000000009" fill="#000" stroke="#6a6a6a" stroke-width="2"/>
<text x="2148.6" y="1620.4" font-family="Liberation Sans" font-size="23" fill="#c4c8cc" font-weight="normal" text-anchor="start" textLength="73.6" lengthAdjust="spacingAndGlyphs" >163°40</text>
<rect x="1968.5" y="1641.3" width="79.0" height="23.100000000000136" fill="#000" stroke="#6a6a6a" stroke-width="2"/>
<text x="1972.0" y="1660.4" font-family="Liberation Sans" font-size="23" fill="#c4c8cc" font-weight="normal" text-anchor="start" textLength="74.0" lengthAdjust="spacingAndGlyphs" >163°30'</text>
<rect x="1768.6" y="1590.2" width="81.60000000000014" height="26.200000000000045" fill="#000" stroke="#6a6a6a" stroke-width="2"/>
<text x="1772.1" y="1612.4" font-family="Liberation Sans" font-size="23" fill="#c4c8cc" font-weight="normal" text-anchor="start" textLength="76.6" lengthAdjust="spacingAndGlyphs" >163°20'</text>
<rect x="1592.3" y="1632" width="77.29999999999995" height="23.59999999999991" fill="#000" stroke="#6a6a6a" stroke-width="2"/>
<text x="1595.8" y="1651.6" font-family="Liberation Sans" font-size="23" fill="#c4c8cc" font-weight="normal" text-anchor="start" textLength="72.3" lengthAdjust="spacingAndGlyphs" >163°10'</text>
<rect x="1427.6" y="1645.3" width="49.5" height="23.100000000000136" fill="#000" stroke="#6a6a6a" stroke-width="2"/>
<text x="1431.1" y="1664.4" font-family="Liberation Sans" font-size="23" fill="#c4c8cc" font-weight="normal" text-anchor="start" textLength="44.5" lengthAdjust="spacingAndGlyphs" >163°</text>
<rect x="1214" y="1623.7" width="79.5" height="26.200000000000045" fill="#000" stroke="#6a6a6a" stroke-width="2"/>
<text x="1217.5" y="1645.9" font-family="Liberation Sans" font-size="23" fill="#c4c8cc" font-weight="normal" text-anchor="start" textLength="74.5" lengthAdjust="spacingAndGlyphs" >162°50'</text>
<rect x="1036.5" y="1644.4" width="78.59999999999991" height="24.0" fill="#000" stroke="#6a6a6a" stroke-width="2"/>
<text x="1040.0" y="1664.4" font-family="Liberation Sans" font-size="23" fill="#c4c8cc" font-weight="normal" text-anchor="start" textLength="73.6" lengthAdjust="spacingAndGlyphs" >162°40'</text>
<rect x="836.1" y="1617" width="79.5" height="24" fill="#000" stroke="#6a6a6a" stroke-width="2"/>
<text x="839.6" y="1637" font-family="Liberation Sans" font-size="23" fill="#c4c8cc" font-weight="normal" text-anchor="start" textLength="74.5" lengthAdjust="spacingAndGlyphs" >162°30'</text>
<rect x="658.6" y="1644" width="79.39999999999998" height="24.40000000000009" fill="#000" stroke="#6a6a6a" stroke-width="2"/>
<text x="662.1" y="1664.4" font-family="Liberation Sans" font-size="23" fill="#c4c8cc" font-weight="normal" text-anchor="start" textLength="74.4" lengthAdjust="spacingAndGlyphs" >162°20'</text>
<rect x="460" y="1610.9" width="79" height="23.59999999999991" fill="#000" stroke="#6a6a6a" stroke-width="2"/>
<text x="463.5" y="1630.5" font-family="Liberation Sans" font-size="23" fill="#c4c8cc" font-weight="normal" text-anchor="start" textLength="74.0" lengthAdjust="spacingAndGlyphs" >162°10'</text>
<rect x="2276" y="644.3" width="30" height="25.3" fill="#000" stroke="#6a6a6a" stroke-width="2"/>
<text x="2279.5" y="667" font-family="Liberation Sans" font-size="24" fill="#d0d050" font-weight="normal" text-anchor="start" textLength="21.5" lengthAdjust="spacingAndGlyphs" >11</text>
<text x="1308.6" y="573.4" font-family="Liberation Sans" font-size="22" fill="#b8c0d0" font-weight="normal" text-anchor="start" textLength="74.2" lengthAdjust="spacingAndGlyphs" stroke="#b8c0d0" stroke-width="0.45" >IMX174</text>
<text x="1098.8" y="914.7" font-family="Liberation Sans" font-size="25" fill="#d8d8e0" font-weight="bold" text-anchor="start" textLength="245.9" lengthAdjust="spacingAndGlyphs" >04/23/2020 22:00:24 UT</text>
<line x1="1383" y1="955.5" x2="2180" y2="955.5" stroke="#a0a0a0" stroke-width="2" />
<line x1="1688.7" y1="925" x2="1688.7" y2="955.5" stroke="#a0a0a0" stroke-width="2" />
<rect x="1686.7" y="953.5" width="4" height="4" fill="#00e000" />
<text x="1688.7" y="914.7" font-family="Liberation Sans" font-size="25" fill="#d8d8e0" font-weight="bold" text-anchor="start" textLength="57.3" lengthAdjust="spacingAndGlyphs" >21:59</text>
<line x1="1931.8" y1="925" x2="1931.8" y2="955.5" stroke="#a0a0a0" stroke-width="2" />
<rect x="1929.8" y="953.5" width="4" height="4" fill="#00e000" />
<text x="1931.8" y="914.7" font-family="Liberation Sans" font-size="25" fill="#d8d8e0" font-weight="bold" text-anchor="start" textLength="57.2" lengthAdjust="spacingAndGlyphs" >21:58</text>
<line x1="2176.2" y1="925" x2="2176.2" y2="955.5" stroke="#a0a0a0" stroke-width="2" />
<rect x="2174.2" y="953.5" width="4" height="4" fill="#00e000" />
<text x="2176.2" y="914.7" font-family="Liberation Sans" font-size="25" fill="#d8d8e0" font-weight="bold" text-anchor="start" textLength="56.0" lengthAdjust="spacingAndGlyphs" >21:57</text>
<g><line x1="1308.3" y1="955.7" x2="1383" y2="955.7" stroke="#e0e060" stroke-width="2.5"/><line x1="1345.9" y1="918.3" x2="1345.9" y2="994.3" stroke="#e0e060" stroke-width="2.5"/><circle cx="1345.9" cy="955.7" r="16" fill="#000" stroke="#c8c8c8" stroke-width="2.5"/><circle cx="1345" cy="956" r="6" fill="#ffff00"/><circle cx="1347" cy="955.7" r="2.5" fill="#00e000"/></g>
</g>
<rect x="397.6" y="221.5" width="1900.7" height="1469" fill="none" stroke="#6e0000" stroke-width="3.2"/>
<g><path d="M422.6 221.5 L428 229 L417.2 229Z M422.6 276 L428 268 L417.2 268Z M395.6 248.6 L403 243 L403 254Z M449.6 248.6 L442 243 L442 254Z" fill="#20f0f0"/><circle cx="422.6" cy="248.6" r="20.6" fill="#000088" stroke="#c8c8d8" stroke-width="1.5"/><line x1="422.6" y1="247.5" x2="422.6" y2="269.5" stroke="#c0b860" stroke-width="2.5"/></g>
<rect x="466" y="220.5" width="88.2" height="29.5" fill="#ffc0c0" />
<text x="487.5" y="243.3" font-family="Liberation Sans" font-size="26" fill="#a01010" font-weight="normal" text-anchor="start" textLength="45.3" lengthAdjust="spacingAndGlyphs" stroke="#a01010" stroke-width="0.45" >Field</text>
<rect x="558.3" y="220.5" width="87.5" height="29.5" fill="#808080" />
<text x="563.3" y="243.3" font-family="Liberation Sans" font-size="26" fill="#d8d8d8" font-weight="normal" text-anchor="start" textLength="76.8" lengthAdjust="spacingAndGlyphs" stroke="#d8d8d8" stroke-width="0.45" >Horizon</text>
<rect x="2122" y="223.2" width="82.9" height="24.2" fill="#808080" />
<text x="2127.8" y="240.8" font-family="Liberation Sans" font-size="21" fill="#e0e060" font-weight="normal" text-anchor="start" textLength="70.5" lengthAdjust="spacingAndGlyphs" stroke="#e0e060" stroke-width="0.45" >Tycho-2</text>
<rect x="2207" y="223.2" width="90.4" height="24.2" fill="#0a8a0a" />
<text x="2211.5" y="240.8" font-family="Liberation Sans" font-size="21" fill="#e0f060" font-weight="normal" text-anchor="start" textLength="81.5" lengthAdjust="spacingAndGlyphs" stroke="#e0f060" stroke-width="0.45" >RNGCIC</text>
<rect x="4" y="1701.7" width="375.7" height="36.59999999999991" fill="#ffffff" />
<rect x="4" y="1701.7" width="373.7" height="34.59999999999991" fill="#a0a0a0" />
<rect x="6" y="1703.7" width="371.7" height="32.59999999999991" fill="#696969" />
<rect x="8" y="1705.7" width="369.7" height="30.59999999999991" fill="#f0f0f0" />
<rect x="6" y="1734.3" width="371.7" height="2" fill="#e3e3e3" />
<rect x="375.7" y="1703.7" width="2" height="32.59999999999991" fill="#e3e3e3" />
<rect x="8" y="1705.7" width="367.7" height="28.59999999999991" fill="#f0f0f0" />
<text x="11" y="1730.2" font-family="Liberation Sans" font-size="27.6" fill="#000" font-weight="normal" text-anchor="start" textLength="64.4" lengthAdjust="spacingAndGlyphs" stroke="#000" stroke-width="0.45" >Ready</text>
<text x="387.6" y="1729.8" font-family="Liberation Sans" font-size="27.6" fill="#000" font-weight="normal" text-anchor="start" textLength="38.3" lengthAdjust="spacingAndGlyphs" stroke="#000" stroke-width="0.45" >RA:</text>
<rect x="430" y="1701.6" width="39.60000000000002" height="36.100000000000136" fill="#ffffff" />
<rect x="430" y="1701.6" width="37.60000000000002" height="34.100000000000136" fill="#a0a0a0" />
<rect x="432" y="1703.6" width="35.60000000000002" height="32.100000000000136" fill="#696969" />
<rect x="434" y="1705.6" width="33.60000000000002" height="30.100000000000136" fill="#f0f0f0" />
<rect x="432" y="1733.7" width="35.60000000000002" height="2" fill="#e3e3e3" />
<rect x="465.6" y="1703.6" width="2" height="32.100000000000136" fill="#e3e3e3" />
<rect x="434" y="1705.6" width="31.600000000000023" height="28.100000000000136" fill="#f0f0f0" />
<rect x="471.3" y="1701.6" width="37.39999999999998" height="36.100000000000136" fill="#ffffff" />
<rect x="471.3" y="1701.6" width="35.39999999999998" height="34.100000000000136" fill="#a0a0a0" />
<rect x="473.3" y="1703.6" width="33.39999999999998" height="32.100000000000136" fill="#696969" />
<rect x="475.3" y="1705.6" width="31.399999999999977" height="30.100000000000136" fill="#f0f0f0" />
<rect x="473.3" y="1733.7" width="33.39999999999998" height="2" fill="#e3e3e3" />
<rect x="504.7" y="1703.6" width="2" height="32.100000000000136" fill="#e3e3e3" />
<rect x="475.3" y="1705.6" width="29.399999999999977" height="28.100000000000136" fill="#f0f0f0" />
<rect x="510.9" y="1701.6" width="38.200000000000045" height="36.100000000000136" fill="#ffffff" />
<rect x="510.9" y="1701.6" width="36.200000000000045" height="34.100000000000136" fill="#a0a0a0" />
<rect x="512.9" y="1703.6" width="34.200000000000045" height="32.100000000000136" fill="#696969" />
<rect x="514.9" y="1705.6" width="32.200000000000045" height="30.100000000000136" fill="#f0f0f0" />
<rect x="512.9" y="1733.7" width="34.200000000000045" height="2" fill="#e3e3e3" />
<rect x="545.1" y="1703.6" width="2" height="32.100000000000136" fill="#e3e3e3" />
<rect x="514.9" y="1705.6" width="30.200000000000045" height="28.100000000000136" fill="#f0f0f0" />
<rect x="601.4" y="1701.6" width="51.0" height="36.100000000000136" fill="#ffffff" />
<rect x="601.4" y="1701.6" width="49.0" height="34.100000000000136" fill="#a0a0a0" />
<rect x="603.4" y="1703.6" width="47.0" height="32.100000000000136" fill="#696969" />
<rect x="605.4" y="1705.6" width="45.0" height="30.100000000000136" fill="#f0f0f0" />
<rect x="603.4" y="1733.7" width="47.0" height="2" fill="#e3e3e3" />
<rect x="648.4" y="1703.6" width="2" height="32.100000000000136" fill="#e3e3e3" />
<rect x="605.4" y="1705.6" width="43.0" height="28.100000000000136" fill="#f0f0f0" />
<rect x="653.2" y="1701.6" width="40.39999999999998" height="36.100000000000136" fill="#ffffff" />
<rect x="653.2" y="1701.6" width="38.39999999999998" height="34.100000000000136" fill="#a0a0a0" />
<rect x="655.2" y="1703.6" width="36.39999999999998" height="32.100000000000136" fill="#696969" />
<rect x="657.2" y="1705.6" width="34.39999999999998" height="30.100000000000136" fill="#f0f0f0" />
<rect x="655.2" y="1733.7" width="36.39999999999998" height="2" fill="#e3e3e3" />
<rect x="689.6" y="1703.6" width="2" height="32.100000000000136" fill="#e3e3e3" />
<rect x="657.2" y="1705.6" width="32.39999999999998" height="28.100000000000136" fill="#f0f0f0" />
<rect x="694.9" y="1701.6" width="38.200000000000045" height="36.100000000000136" fill="#ffffff" />
<rect x="694.9" y="1701.6" width="36.200000000000045" height="34.100000000000136" fill="#a0a0a0" />
<rect x="696.9" y="1703.6" width="34.200000000000045" height="32.100000000000136" fill="#696969" />
<rect x="698.9" y="1705.6" width="32.200000000000045" height="30.100000000000136" fill="#f0f0f0" />
<rect x="696.9" y="1733.7" width="34.200000000000045" height="2" fill="#e3e3e3" />
<rect x="729.1" y="1703.6" width="2" height="32.100000000000136" fill="#e3e3e3" />
<rect x="698.9" y="1705.6" width="30.200000000000045" height="28.100000000000136" fill="#f0f0f0" />
<rect x="797.7" y="1701.6" width="51.0" height="36.100000000000136" fill="#ffffff" />
<rect x="797.7" y="1701.6" width="49.0" height="34.100000000000136" fill="#a0a0a0" />
<rect x="799.7" y="1703.6" width="47.0" height="32.100000000000136" fill="#696969" />
<rect x="801.7" y="1705.6" width="45.0" height="30.100000000000136" fill="#f0f0f0" />
<rect x="799.7" y="1733.7" width="47.0" height="2" fill="#e3e3e3" />
<rect x="844.7" y="1703.6" width="2" height="32.100000000000136" fill="#e3e3e3" />
<rect x="801.7" y="1705.6" width="43.0" height="28.100000000000136" fill="#f0f0f0" />
<rect x="849.6" y="1701.6" width="39.5" height="36.100000000000136" fill="#ffffff" />
<rect x="849.6" y="1701.6" width="37.5" height="34.100000000000136" fill="#a0a0a0" />
<rect x="851.6" y="1703.6" width="35.5" height="32.100000000000136" fill="#696969" />
<rect x="853.6" y="1705.6" width="33.5" height="30.100000000000136" fill="#f0f0f0" />
<rect x="851.6" y="1733.7" width="35.5" height="2" fill="#e3e3e3" />
<rect x="885.1" y="1703.6" width="2" height="32.100000000000136" fill="#e3e3e3" />
<rect x="853.6" y="1705.6" width="31.5" height="28.100000000000136" fill="#f0f0f0" />
<rect x="890.4" y="1701.6" width="39.10000000000002" height="36.100000000000136" fill="#ffffff" />
<rect x="890.4" y="1701.6" width="37.10000000000002" height="34.100000000000136" fill="#a0a0a0" />
<rect x="892.4" y="1703.6" width="35.10000000000002" height="32.100000000000136" fill="#696969" />
<rect x="894.4" y="1705.6" width="33.10000000000002" height="30.100000000000136" fill="#f0f0f0" />
<rect x="892.4" y="1733.7" width="35.10000000000002" height="2" fill="#e3e3e3" />
<rect x="925.5" y="1703.6" width="2" height="32.100000000000136" fill="#e3e3e3" />
<rect x="894.4" y="1705.6" width="31.100000000000023" height="28.100000000000136" fill="#f0f0f0" />
<text x="434.4" y="1729.8" font-family="Liberation Sans" font-size="27.6" fill="#a01818" font-weight="normal" text-anchor="start" textLength="25.5" lengthAdjust="spacingAndGlyphs" stroke="#a01818" stroke-width="0.45" >14</text>
<text x="475.6" y="1729.8" font-family="Liberation Sans" font-size="27.6" fill="#a01818" font-weight="normal" text-anchor="start" textLength="26.8" lengthAdjust="spacingAndGlyphs" stroke="#a01818" stroke-width="0.45" >00</text>
<text x="516.4" y="1729.8" font-family="Liberation Sans" font-size="27.6" fill="#a01818" font-weight="normal" text-anchor="start" textLength="24.2" lengthAdjust="spacingAndGlyphs" stroke="#a01818" stroke-width="0.45" >47</text>
<text x="608.6" y="1729.8" font-family="Liberation Sans" font-size="27.6" fill="#a01818" font-weight="normal" text-anchor="start" textLength="31.9" lengthAdjust="spacingAndGlyphs" stroke="#a01818" stroke-width="0.45" >-29</text>
<text x="659.6" y="1729.8" font-family="Liberation Sans" font-size="27.6" fill="#a01818" font-weight="normal" text-anchor="start" textLength="25.5" lengthAdjust="spacingAndGlyphs" stroke="#a01818" stroke-width="0.45" >39</text>
<text x="700" y="1729.8" font-family="Liberation Sans" font-size="27.6" fill="#a01818" font-weight="normal" text-anchor="start" textLength="26.3" lengthAdjust="spacingAndGlyphs" stroke="#a01818" stroke-width="0.45" >40</text>
<text x="819" y="1729.8" font-family="Liberation Sans" font-size="27.6" fill="#a01818" font-weight="normal" text-anchor="start" textLength="25.5" lengthAdjust="spacingAndGlyphs" stroke="#a01818" stroke-width="0.45" >01</text>
<text x="854.3" y="1729.8" font-family="Liberation Sans" font-size="27.6" fill="#a01818" font-weight="normal" text-anchor="start" textLength="26.3" lengthAdjust="spacingAndGlyphs" stroke="#a01818" stroke-width="0.45" >42</text>
<text x="894.6" y="1729.8" font-family="Liberation Sans" font-size="27.6" fill="#a01818" font-weight="normal" text-anchor="start" textLength="24.3" lengthAdjust="spacingAndGlyphs" stroke="#a01818" stroke-width="0.45" >01</text>
<text x="559.7" y="1729.8" font-family="Liberation Sans" font-size="27.6" fill="#000" font-weight="normal" text-anchor="start" textLength="38.3" lengthAdjust="spacingAndGlyphs" stroke="#000" stroke-width="0.45" >DE:</text>
<text x="740.4" y="1729.8" font-family="Liberation Sans" font-size="27.6" fill="#000" font-weight="normal" text-anchor="start" textLength="52.2" lengthAdjust="spacingAndGlyphs" stroke="#000" stroke-width="0.45" >Field:</text>
<defs><radialGradient id="gb" cx="0.4" cy="0.35" r="0.7"><stop offset="0" stop-color="#e0ffe0"/><stop offset="0.35" stop-color="#20e020"/><stop offset="1" stop-color="#00a000"/></radialGradient></defs>
<circle cx="952.9" cy="1720.7" r="12.8" fill="url(#gb)"/><circle cx="982.6" cy="1720.7" r="12.8" fill="url(#gb)"/>
<rect x="1006" y="1699.5" width="223.1" height="22.1" fill="#ff0000" />
<text x="1010.2" y="1718.6" font-family="Liberation Sans" font-size="21" fill="#ffff00" font-weight="bold" text-anchor="start" textLength="214.7" lengthAdjust="spacingAndGlyphs" >04/23/2020 22:00:24</text>
<text x="1029.4" y="1735.6" font-family="Liberation Sans" font-size="15" fill="#404040" font-weight="normal" text-anchor="start" textLength="176.3" lengthAdjust="spacingAndGlyphs" stroke="#404040" stroke-width="0.45" >+8°28'23'' / +47°20'31''</text>
<circle cx="1254.6" cy="1717.3" r="17" fill="#000090"/>
<rect x="1295.6" y="1700.5" width="112.8" height="3" fill="#8a8a8a" />
<rect x="1295.6" y="1703.5" width="112.8" height="1.5" fill="#ffffff" />
<path d="M1355.5 1698 v12 l-2 3" stroke="#707070" stroke-width="2.5" fill="none"/>
<rect x="1295.6" y="1722" width="112.8" height="3" fill="#8a8a8a" />
<rect x="1295.6" y="1725" width="112.8" height="1.5" fill="#ffffff" />
<path d="M1302.5 1719 v12 l-2 4" stroke="#707070" stroke-width="2.5" fill="none"/>
<rect x="1432.4" y="1700" width="38.399999999999864" height="38.40000000000009" fill="#696969" />
<rect x="1432.4" y="1700" width="36.399999999999864" height="36.40000000000009" fill="#ffffff" />
<rect x="1434.4" y="1702" width="34.399999999999864" height="34.40000000000009" fill="#a0a0a0" />
<rect x="1434.4" y="1702" width="32.399999999999864" height="32.40000000000009" fill="#c8f8c8" />
<rect x="1473.2" y="1700" width="38.399999999999864" height="38.40000000000009" fill="#696969" />
<rect x="1473.2" y="1700" width="36.399999999999864" height="36.40000000000009" fill="#ffffff" />
<rect x="1475.2" y="1702" width="34.399999999999864" height="34.40000000000009" fill="#a0a0a0" />
<rect x="1475.2" y="1702" width="32.399999999999864" height="32.40000000000009" fill="#c8f8c8" />
<path d="M1444.5 1718 h17.5 M1453.2 1709.5 v17" stroke="#000080" stroke-width="3.6"/><path d="M1485.6 1717.7 h16.4" stroke="#000080" stroke-width="3.6"/>
<rect x="1518.8" y="1697.6" width="175.2" height="43.2" fill="#e2e2e2" />
<text x="1521.2" y="1716.3" font-family="Liberation Sans" font-size="17.5" fill="#a01818" font-weight="normal" text-anchor="start" textLength="160.8" lengthAdjust="spacingAndGlyphs" stroke="#a01818" stroke-width="0.45" >JD: 2458963.41694</text>
<text x="1521.2" y="1735.8" font-family="Liberation Sans" font-size="17.5" fill="#a01818" font-weight="normal" text-anchor="start" textLength="100.8" lengthAdjust="spacingAndGlyphs" stroke="#a01818" stroke-width="0.45" >ST: 12:43:54</text>
<rect x="2047" y="1702.4" width="254.4000000000001" height="38.399999999999864" fill="#ffffff" />
<rect x="2047" y="1702.4" width="252.4000000000001" height="36.399999999999864" fill="#a0a0a0" />
<rect x="2049" y="1704.4" width="250.4000000000001" height="34.399999999999864" fill="#696969" />
<rect x="2051" y="1706.4" width="248.4000000000001" height="32.399999999999864" fill="#f0f0f0" />
<rect x="2049" y="1736.8" width="250.4000000000001" height="2" fill="#e3e3e3" />
<rect x="2297.4" y="1704.4" width="2" height="34.399999999999864" fill="#e3e3e3" />
<rect x="2051" y="1706.4" width="246.4000000000001" height="30.399999999999864" fill="#f0f0f0" />
<text x="2054.2" y="1733.6" font-family="Liberation Sans" font-size="28.5" fill="#1e6e1e" font-weight="normal" text-anchor="start" textLength="235.2" lengthAdjust="spacingAndGlyphs" stroke="#1e6e1e" stroke-width="0.45" >13h57m00s  -29°43'00''</text>
<rect x="216.3" y="111.5" width="48.19999999999999" height="44.5" fill="#f7f7f7" />
<rect x="216.3" y="111.5" width="48.19999999999999" height="3" fill="#c4c4c4" />
<rect x="216.3" y="111.5" width="3" height="44.5" fill="#c4c4c4" />
<rect x="347" y="111.5" width="46.5" height="44.5" fill="#f7f7f7" />
<rect x="347" y="111.5" width="46.5" height="3" fill="#c4c4c4" />
<rect x="347" y="111.5" width="3" height="44.5" fill="#c4c4c4" />
<rect x="396.2" y="111.5" width="46.10000000000002" height="44.5" fill="#f7f7f7" />
<rect x="396.2" y="111.5" width="46.10000000000002" height="3" fill="#c4c4c4" />
<rect x="396.2" y="111.5" width="3" height="44.5" fill="#c4c4c4" />
<rect x="494.9" y="111.5" width="45.5" height="44.5" fill="#f7f7f7" />
<rect x="494.9" y="111.5" width="45.5" height="3" fill="#c4c4c4" />
<rect x="494.9" y="111.5" width="3" height="44.5" fill="#c4c4c4" />
<rect x="544" y="111.5" width="45.799999999999955" height="44.5" fill="#f7f7f7" />
<rect x="544" y="111.5" width="45.799999999999955" height="3" fill="#c4c4c4" />
<rect x="544" y="111.5" width="3" height="44.5" fill="#c4c4c4" />
<rect x="592.4" y="111.5" width="46.39999999999998" height="44.5" fill="#f7f7f7" />
<rect x="592.4" y="111.5" width="46.39999999999998" height="3" fill="#c4c4c4" />
<rect x="592.4" y="111.5" width="3" height="44.5" fill="#c4c4c4" />
<rect x="642.3" y="111.5" width="45.80000000000007" height="44.5" fill="#f7f7f7" />
<rect x="642.3" y="111.5" width="45.80000000000007" height="3" fill="#c4c4c4" />
<rect x="642.3" y="111.5" width="3" height="44.5" fill="#c4c4c4" />
<rect x="691.3" y="111.5" width="45.60000000000002" height="44.5" fill="#f7f7f7" />
<rect x="691.3" y="111.5" width="45.60000000000002" height="3" fill="#c4c4c4" />
<rect x="691.3" y="111.5" width="3" height="44.5" fill="#c4c4c4" />
<rect x="855.9" y="111.5" width="45.200000000000045" height="44.5" fill="#f7f7f7" />
<rect x="855.9" y="111.5" width="45.200000000000045" height="3" fill="#c4c4c4" />
<rect x="855.9" y="111.5" width="3" height="44.5" fill="#c4c4c4" />
<rect x="905.2" y="111.5" width="45.799999999999955" height="44.5" fill="#f7f7f7" />
<rect x="905.2" y="111.5" width="45.799999999999955" height="3" fill="#c4c4c4" />
<rect x="905.2" y="111.5" width="3" height="44.5" fill="#c4c4c4" />
<rect x="954" y="111.5" width="45.89999999999998" height="44.5" fill="#f7f7f7" />
<rect x="954" y="111.5" width="45.89999999999998" height="3" fill="#c4c4c4" />
<rect x="954" y="111.5" width="3" height="44.5" fill="#c4c4c4" />
<rect x="1002.8" y="111.5" width="45.799999999999955" height="44.5" fill="#f7f7f7" />
<rect x="1002.8" y="111.5" width="45.799999999999955" height="3" fill="#c4c4c4" />
<rect x="1002.8" y="111.5" width="3" height="44.5" fill="#c4c4c4" />
<rect x="1052.2" y="111.5" width="45.799999999999955" height="44.5" fill="#f7f7f7" />
<rect x="1052.2" y="111.5" width="45.799999999999955" height="3" fill="#c4c4c4" />
<rect x="1052.2" y="111.5" width="3" height="44.5" fill="#c4c4c4" />
<rect x="1150" y="111.5" width="46.40000000000009" height="44.5" fill="#f7f7f7" />
<rect x="1150" y="111.5" width="46.40000000000009" height="3" fill="#c4c4c4" />
<rect x="1150" y="111.5" width="3" height="44.5" fill="#c4c4c4" />
<rect x="1627" y="111.5" width="45.90000000000009" height="44.5" fill="#f7f7f7" />
<rect x="1627" y="111.5" width="45.90000000000009" height="3" fill="#c4c4c4" />
<rect x="1627" y="111.5" width="3" height="44.5" fill="#c4c4c4" />
<rect x="205.3" y="115.6" width="2" height="37.599999999999994" fill="#a8a8a8" />
<rect x="844.3" y="115.6" width="2" height="37.599999999999994" fill="#a8a8a8" />
<rect x="1205.4" y="115.6" width="2" height="37.599999999999994" fill="#a8a8a8" />
<rect x="1517" y="115.6" width="2" height="37.599999999999994" fill="#a8a8a8" />
<rect x="1681.8" y="115.6" width="2" height="37.599999999999994" fill="#a8a8a8" />
<rect x="1993.5" y="115.6" width="2" height="37.599999999999994" fill="#a8a8a8" />
<rect x="2109.2" y="115.6" width="2" height="37.599999999999994" fill="#a8a8a8" />
<g fill="none" stroke="#000" stroke-width="3.2"><circle cx="24.1" cy="132.6" r="11.3"/><circle cx="72.9" cy="132.6" r="11.3"/><path d="M32.5 141 L39.5 148.5 M81.3 141 L88.3 148.5" stroke-width="4.2"/><path d="M18 132.6 h12.2 M24.1 126.5 v12.2 M66.8 132.6 h12.2" stroke-width="3.6"/></g>
<path d="M117.5 134.5 L128.7 123.8 L128.7 145.2Z" fill="#000"/><path d="M179.8 134.5 L169.2 123.8 L169.2 145.2Z" fill="#8c8c8c"/>
<g stroke="#000" stroke-width="2.8"><path d="M229 127 h26 M229 133.5 h26 M229 140 h26 M229 146.5 h26 M232 124 v25 M238.5 124 v25 M245 124 v25 M251.5 124 v25"/></g>
<g><path d="M274.3 142.7 V133.3 L283 123.9 H294.9 L303.6 134.4 V142.7Z" fill="#a0a0a0" stroke="#000" stroke-width="2.2" stroke-linejoin="round"/><path d="M277.5 134 v8 M281.5 130 v12 M296.5 130 v12 M300.5 134 v8" stroke="#303030" stroke-width="1.6"/><path d="M279 133 v9 M299 133 v9" stroke="#f0f0f0" stroke-width="1.2"/><rect x="284.8" y="130.8" width="8" height="11" fill="#fff"/><path d="M283 124.3 H294.9 L289 129.8Z" fill="#000"/></g>
<path d="M320.5 131.3 h15.2 l-7.6 8.6z" fill="#000"/>
<line x1="375.3" y1="122" x2="375.3" y2="151.4" stroke="#20a020" stroke-width="2.2"/><circle cx="362.3" cy="135.6" r="5" fill="#ffff00" stroke="#000" stroke-width="1.5"/><path d="M368 135.6 h13" stroke="#000" stroke-width="2.4"/><path d="M388 135.6 l-8 -5.5 v11z" fill="#000"/>
<path d="M427 125 L412.9 139 L432.3 143.2 Z" fill="none" stroke="#2020a0" stroke-width="1.8"/><circle cx="412.9" cy="126.2" r="3.8" fill="#00e0e0" stroke="#000" stroke-width="1"/><circle cx="427" cy="125" r="2.5" fill="#00c0c0"/><circle cx="412.9" cy="139" r="4" fill="#ffff00" stroke="#000" stroke-width="1"/><circle cx="432.3" cy="143.2" r="4.3" fill="#ff0000" stroke="#000" stroke-width="1"/><path d="M420.5 145 l2.5 3.5 l-2.5 3.5 l-2.5 -3.5z" fill="#c0b000"/>
<text x="451.7" y="140.3" font-family="Liberation Sans" font-size="19" fill="#000" font-weight="bold" text-anchor="start" textLength="34.0" lengthAdjust="spacingAndGlyphs" >Tau</text>
<circle cx="479.3" cy="123.2" r="4.2" fill="#ff0000" stroke="#000" stroke-width="1"/><path d="M457.5 147.3 h20.6" stroke="#909090" stroke-width="1.6"/><circle cx="457.5" cy="147.3" r="4" fill="#ffff00" stroke="#000" stroke-width="1"/><circle cx="478.1" cy="146.1" r="2.8" fill="#00c0c0"/>
<path d="M502 133 L510 140 L520 131 L530 127 L537 120 L537 141 L528 140 L520 148 L511 150 L502 145Z" fill="#5a5aff" opacity="0.85"/>
<line x1="554.5" y1="150.8" x2="583.3" y2="150.8" stroke="#000" stroke-width="2.5"/><path d="M566 150 L567 136 L571 136 L572 150Z" fill="#a08020"/><ellipse cx="568.6" cy="127.8" rx="13.5" ry="9" fill="#10a010" stroke="#006000" stroke-width="1"/><ellipse cx="566" cy="125" rx="6" ry="3.5" fill="#40e040"/>
<ellipse cx="617.6" cy="136.7" rx="16" ry="11.5" fill="none" stroke="#000" stroke-width="2" stroke-dasharray="2 3"/>
<circle cx="656.4" cy="127.9" r="3.5" fill="#ffff00" stroke="#000" stroke-width="1"/>
<text x="658" y="147" font-family="Liberation Serif" font-size="30" fill="#000" font-weight="bold" text-anchor="start" textLength="22" lengthAdjust="spacingAndGlyphs" font-style="italic">α</text>
<rect x="702.5" y="123" width="21.5" height="23" rx="3" fill="#ff1010"/><line x1="723" y1="146" x2="731" y2="153.2" stroke="#ff2020" stroke-width="2"/>
<text x="705.5" y="142" font-family="Liberation Sans" font-size="18" fill="#ffffff" font-weight="bold" text-anchor="start" textLength="15.5" lengthAdjust="spacingAndGlyphs" >M</text>
<path d="M754 119.5 h18 l6.5 6.5 v17.5 l-6.5 6.5 h-18 l-6.5 -6.5 v-17.5z" fill="#0000e0"/><path d="M754 119.5 h4 v30.5 h-4 l-6.5 -6.5 v-17.5z" fill="#000"/><g fill="#ffe000"><circle cx="760" cy="144" r="2.5"/><circle cx="768" cy="130" r="2"/><circle cx="770" cy="140" r="1.8"/><circle cx="751" cy="134" r="1.6"/></g>
<rect x="796.7" y="119" width="31.5" height="31.5" fill="#fff" stroke="#000" stroke-width="2.2"/><path d="M801 123 L824 146 M824 123 L801 146" stroke="#b04040" stroke-width="1.6"/><g fill="#900000"><path d="M800 122 h7 l-7 7z M825 122 h-7 l7 7z M800 147 h7 l-7 -7z M825 147 h-7 l7 -7z"/></g>
<circle cx="871.1" cy="126.7" r="5" fill="#ffff00" stroke="#000" stroke-width="1.2"/><circle cx="891.7" cy="138.5" r="4" fill="#00e0e0" stroke="#000" stroke-width="1.2"/><g fill="#a01010"><path d="M890.5 122.7 l3 4 l-3 4 l-3 -4z M880 131.6 l3 4 l-3 4 l-3 -4z"/></g><path d="M871.1 138 l3 4 l-3 4 l-3 -4z" fill="#c0b000"/><path d="M884.1 144.5 l3 4 l-3 4 l-3 -4z" fill="#909090"/>
<ellipse cx="931.1" cy="136.1" rx="11" ry="16" transform="rotate(-12 931.1 136.1)" fill="#c0c0c0" stroke="#ff2020" stroke-width="1.8"/><path d="M931.1 131 l2 5 l-2 5 l-2 -5z M926 136.1 l5 -2 l5 2 l-5 2z" fill="#ff0000"/>
<circle cx="978.7" cy="136.1" r="16" fill="#808080" stroke="#202020" stroke-width="1.8"/><path d="M983 120.5 A16 16 0 0 1 983 151.7 A10 16 0 0 0 983 120.5Z" fill="#ffff80"/>
<line x1="1012.8" y1="151.4" x2="1042.8" y2="122" stroke="#c04040" stroke-width="1.3"/><g fill="#ff0000" stroke="#500000" stroke-width="1"><circle cx="1019.2" cy="145" r="4.3"/><circle cx="1028" cy="136.1" r="4.3"/><circle cx="1036.9" cy="127.9" r="4.3"/></g>
<g stroke="#404040" stroke-width="1.6"><path d="M1080 133 L1063 147 M1083 136 L1066 151 M1086 139 L1072 152 M1077 130 L1062 143"/></g><circle cx="1085" cy="129.1" r="6" fill="#ffff80" stroke="#000" stroke-width="1.5"/>
<text x="1111.7" y="147.3" font-family="Liberation Serif" font-size="30" fill="#000" font-weight="bold" text-anchor="start" textLength="23.0" lengthAdjust="spacingAndGlyphs" >U</text>
<path d="M1135.8 128 l2.8 3.4 l-2.8 3.4 l-2.8 -3.4z" fill="#ff0000"/>
<text x="1160.5" y="149.7" font-family="Liberation Serif" font-size="30" fill="#000" font-weight="bold" text-anchor="start" textLength="23.5" lengthAdjust="spacingAndGlyphs" >D</text>
<path d="M1187 124 l2.8 3.4 l-2.8 3.4 l-2.8 -3.4z" fill="#ff0000"/>
<text x="1230.5" y="145.5" font-family="Liberation Sans" font-size="31" fill="#000" font-weight="bold" text-anchor="start" textLength="16.4" lengthAdjust="spacingAndGlyphs" >S</text>
<text x="1279.2" y="145.5" font-family="Liberation Sans" font-size="31" fill="#000" font-weight="bold" text-anchor="start" textLength="18.8" lengthAdjust="spacingAndGlyphs" >N</text>
<text x="1328.6" y="145.5" font-family="Liberation Sans" font-size="31" fill="#000" font-weight="bold" text-anchor="start" textLength="15.9" lengthAdjust="spacingAndGlyphs" >E</text>
<text x="1371.7" y="145.5" font-family="Liberation Sans" font-size="31" fill="#000" font-weight="bold" text-anchor="start" textLength="30.6" lengthAdjust="spacingAndGlyphs" >W</text>
<rect x="1420.9" y="119" width="28.6" height="29.1" fill="#fff" stroke="#000" stroke-width="2.2"/><path d="M1435.2 122 v23 M1423 133.5 h24.5" stroke="#000" stroke-width="1.8"/><g fill="#000"><path d="M1435.2 121 l-4 5 h8z M1435.2 146 l-4 -5 h8z M1422 133.5 l5 -4 v8z M1448.5 133.5 l-5 -4 v8z"/></g>
<rect x="1469.7" y="119" width="29.2" height="29.1" fill="#fff" stroke="#000" stroke-width="2.2"/><rect x="1470" y="135" width="29" height="13" fill="#000"/><path d="M1473 146 l5 -9 M1479 146 l5 -9 M1485 146 l5 -9 M1491 146 l5 -9" stroke="#fff" stroke-width="1.8"/>
<circle cx="1550" cy="133.8" r="15.5" fill="#20e8f0" stroke="#303030" stroke-width="1.6"/><path d="M1544 122 Q1552 118 1560 121 Q1566 127 1565 136 Q1560 140 1556 137 Q1552 142 1548 139 Q1543 133 1544 122Z" fill="#008a00"/><path d="M1545 120.5 Q1550 117.5 1555 120.5 L1552 124 L1547 124Z" fill="#ffffff"/><path d="M1553 139 Q1560 137 1563 142 Q1558 148 1552 146Z" fill="#40d0e0"/><circle cx="1548.5" cy="132" r="1.2" fill="#a02020"/>
<circle cx="1601.7" cy="135" r="15.5" fill="#ffff90" stroke="#202020" stroke-width="1.8" stroke-dasharray="3 1"/><path d="M1594 142 L1601.7 135 L1614 135" stroke="#202020" stroke-width="2" fill="none"/>
<rect x="1636.2" y="120.7" width="31.5" height="31" fill="#fafafa" stroke="#202020" stroke-width="2"/><line x1="1648.8" y1="120.7" x2="1648.8" y2="151.7" stroke="#202020" stroke-width="2"/><g fill="#20a020"><rect x="1640" y="124" width="6" height="2.5"/><rect x="1640" y="128" width="6" height="2.5"/><rect x="1640" y="132" width="6" height="2.5"/><rect x="1640" y="141" width="6" height="2.5"/><rect x="1640" y="145" width="6" height="2.5"/></g><path d="M1657 123 l4.5 5 l-4.5 5 l-4.5 -5z M1661 139 l4.5 5 l-4.5 5 l-4.5 -5z" fill="#e0e000" stroke="#404000" stroke-width="0.8"/><circle cx="1655" cy="138" r="2" fill="#a02020"/>
<path d="M1702 137 Q1707 127 1713 129 Q1718 131 1721 140 Q1725 147 1730 140" fill="none" stroke="#00e0f0" stroke-width="3"/><path d="M1710 128 Q1714 128 1717 132 M1721 142 Q1725 146 1730 141" fill="none" stroke="#202020" stroke-width="2.4"/>
<g fill="#e0e000" stroke="#202020" stroke-width="1.2"><path d="M1781.7 135.0 L1774.0 131.6 L1774.0 138.4Z"/><path d="M1777.0 146.3 L1774.0 138.5 L1769.2 143.3Z"/><path d="M1765.7 151.0 L1769.1 143.3 L1762.3 143.3Z"/><path d="M1754.4 146.3 L1762.2 143.3 L1757.4 138.5Z"/><path d="M1749.7 135.0 L1757.4 138.4 L1757.4 131.6Z"/><path d="M1754.4 123.7 L1757.4 131.5 L1762.2 126.7Z"/><path d="M1765.7 119.0 L1762.3 126.7 L1769.1 126.7Z"/><path d="M1777.0 123.7 L1769.2 126.7 L1774.0 131.5Z"/></g><circle cx="1765.7" cy="135" r="10" fill="#f0f000" stroke="#202020" stroke-width="1.5"/>
<path d="M1804.9 135.6 A9 9 0 0 1 1822.9 135.6Z" fill="#f0f000" stroke="#303030" stroke-width="1"/><rect x="1797.4" y="135.6" width="33.6" height="15.8" fill="#888"/><rect x="1797.4" y="134.6" width="33.6" height="2" fill="#000"/>
<ellipse cx="1860.6" cy="134.3" rx="14" ry="17" fill="#000080"/><path d="M1871 119 Q1880 134 1871 150 Q1876 134 1871 119Z" fill="#fff"/>
<line x1="1895.8" y1="117.9" x2="1929.3" y2="151.4" stroke="#808080" stroke-width="1.2"/><g fill="#fff" stroke="#303030" stroke-width="2"><circle cx="1901.7" cy="123.8" r="3.8"/><circle cx="1912.9" cy="135" r="3.8"/><circle cx="1923.4" cy="145.5" r="3.8"/></g>
<rect x="1947.5" y="126" width="29" height="18" rx="2" fill="#202020"/><rect x="1955" y="122" width="13" height="5" rx="1.5" fill="#202020"/><rect x="1950" y="129" width="4" height="13" fill="#808080"/><rect x="1970" y="129" width="4" height="13" fill="#808080"/><circle cx="1961.6" cy="135.6" r="6.5" fill="#20c0d0" stroke="#606060" stroke-width="1.5"/>
<g transform="rotate(-30 2027.5 135.6)"><rect x="2015" y="123" width="25" height="25" fill="#ff8080" stroke="#202020" stroke-width="1.8" stroke-dasharray="3 1.5"/><path d="M2027.5 132 l3 3.6 l-3 3.6 l-3 -3.6z" fill="#404040"/></g>
<text x="2063.8" y="127.9" font-family="Liberation Sans" font-size="11" fill="#000" font-weight="bold" text-anchor="start" textLength="26.4" lengthAdjust="spacingAndGlyphs" >DSS</text>
<rect x="2067.3" y="131.4" width="18.2" height="20" fill="#c8c8c8" stroke="#303030" stroke-width="1.5"/><rect x="2070" y="143" width="13" height="6" fill="none" stroke="#505050" stroke-width="1"/><circle cx="2078" cy="135" r="1.3" fill="#ff2020"/><circle cx="2081" cy="135" r="1.3" fill="#20e020"/>
<path d="M2132 122 Q2135 117 2140 117 h12 Q2157 119 2158 124 v12 h-10 v16 h-12 v-8 h-5 v-8 h-2z" fill="#fff" stroke="#303030" stroke-width="1.5"/><rect x="2140" y="117.5" width="8" height="13" fill="#000"/><rect x="2129" y="143" width="9" height="4" fill="#303030"/><rect x="2132" y="147" width="4" height="5" fill="#303030"/><rect x="2146" y="135" width="12" height="16" fill="#888"/><path d="M2148 143 l3 3 l6 -6" stroke="#fff" stroke-width="1.8" fill="none"/>
<text x="17.4" y="194.6" font-family="Liberation Sans" font-size="20.8" fill="#0000a0" font-weight="bold" text-anchor="start" textLength="15.8" lengthAdjust="spacingAndGlyphs" >G</text>
<rect x="58.5" y="167.7" width="2" height="36.30000000000001" fill="#a8a8a8" />
<text x="74.4" y="194.6" font-family="Liberation Sans" font-size="20.8" fill="#000" font-weight="bold" text-anchor="start" textLength="30.1" lengthAdjust="spacingAndGlyphs" >120</text>
<text x="126.6" y="194.6" font-family="Liberation Sans" font-size="20.8" fill="#000" font-weight="bold" text-anchor="start" textLength="23.7" lengthAdjust="spacingAndGlyphs" >90</text>
<text x="175.6" y="194.6" font-family="Liberation Sans" font-size="20.8" fill="#000" font-weight="bold" text-anchor="start" textLength="23.8" lengthAdjust="spacingAndGlyphs" >60</text>
<text x="224.7" y="194.6" font-family="Liberation Sans" font-size="20.8" fill="#000" font-weight="bold" text-anchor="start" textLength="23.7" lengthAdjust="spacingAndGlyphs" >30</text>
<text x="275.3" y="194.6" font-family="Liberation Sans" font-size="20.8" fill="#000" font-weight="bold" text-anchor="start" textLength="22.2" lengthAdjust="spacingAndGlyphs" >10</text>
<text x="331.6" y="194.6" font-family="Liberation Sans" font-size="20.8" fill="#000" font-weight="bold" text-anchor="start" textLength="11.8" lengthAdjust="spacingAndGlyphs" >5</text>
<text x="379.7" y="194.6" font-family="Liberation Sans" font-size="20.8" fill="#000" font-weight="bold" text-anchor="start" textLength="12.7" lengthAdjust="spacingAndGlyphs" >2</text>
<text x="432" y="194.6" font-family="Liberation Sans" font-size="20.8" fill="#000" font-weight="bold" text-anchor="start" textLength="9.5" lengthAdjust="spacingAndGlyphs" >1</text>
<text x="473.1" y="194.6" font-family="Liberation Sans" font-size="20.8" fill="#000" font-weight="bold" text-anchor="start" textLength="23.7" lengthAdjust="spacingAndGlyphs" >30</text>
<text x="523.7" y="194.6" font-family="Liberation Sans" font-size="20.8" fill="#000" font-weight="bold" text-anchor="start" textLength="22.2" lengthAdjust="spacingAndGlyphs" >10</text>
<text x="576" y="194.6" font-family="Liberation Sans" font-size="20.8" fill="#000" font-weight="bold" text-anchor="start" textLength="12.6" lengthAdjust="spacingAndGlyphs" >5</text>
<text x="628.2" y="194.6" font-family="Liberation Sans" font-size="20.8" fill="#000" font-weight="bold" text-anchor="start" textLength="9.5" lengthAdjust="spacingAndGlyphs" >1</text>
<path d="M106 174 l2.5 3 l-2.5 3 l-2.5 -3z" fill="none" stroke="#505050" stroke-width="1.2"/>
<path d="M153.5 174 l2.5 3 l-2.5 3 l-2.5 -3z" fill="none" stroke="#505050" stroke-width="1.2"/>
<path d="M202 174 l2.5 3 l-2.5 3 l-2.5 -3z" fill="none" stroke="#505050" stroke-width="1.2"/>
<path d="M251 174 l2.5 3 l-2.5 3 l-2.5 -3z" fill="none" stroke="#505050" stroke-width="1.2"/>
<path d="M299 174 l2.5 3 l-2.5 3 l-2.5 -3z" fill="none" stroke="#505050" stroke-width="1.2"/>
<path d="M346 174 l2.5 3 l-2.5 3 l-2.5 -3z" fill="none" stroke="#505050" stroke-width="1.2"/>
<path d="M394.5 174 l2.5 3 l-2.5 3 l-2.5 -3z" fill="none" stroke="#505050" stroke-width="1.2"/>
<path d="M443.5 174 l2.5 3 l-2.5 3 l-2.5 -3z" fill="none" stroke="#505050" stroke-width="1.2"/>
<rect x="498.2" y="172.5" width="1.8" height="7" fill="#303030" />
<rect x="547.2" y="172.5" width="1.8" height="7" fill="#303030" />
<rect x="590.2" y="172.5" width="1.8" height="7" fill="#303030" />
<rect x="639.2" y="172.5" width="1.8" height="7" fill="#303030" />
<rect x="665.8" y="167.7" width="2" height="36.30000000000001" fill="#a8a8a8" />
<text x="683" y="195.5" font-family="Liberation Sans" font-size="20.8" fill="#a00000" font-weight="bold" text-anchor="start" textLength="30.9" lengthAdjust="spacingAndGlyphs" >M1</text>
<text x="731" y="195.5" font-family="Liberation Sans" font-size="20.8" fill="#909090" font-weight="bold" text-anchor="start" textLength="32" lengthAdjust="spacingAndGlyphs" >M2</text>
<text x="780.2" y="195.5" font-family="Liberation Sans" font-size="20.8" fill="#909090" font-weight="bold" text-anchor="start" textLength="32.3" lengthAdjust="spacingAndGlyphs" >M3</text>
<rect x="829.7" y="167.7" width="2" height="36.30000000000001" fill="#a8a8a8" />
<rect x="838.6" y="165.3" width="102.0" height="37.79999999999998" fill="#ffffff" />
<rect x="838.6" y="165.3" width="100.0" height="35.79999999999998" fill="#a0a0a0" />
<rect x="840.6" y="167.3" width="98.0" height="33.79999999999998" fill="#696969" />
<rect x="842.6" y="169.3" width="96.0" height="31.799999999999983" fill="#ffffff" />
<rect x="840.6" y="199.1" width="98.0" height="2" fill="#e3e3e3" />
<rect x="936.6" y="167.3" width="2" height="33.79999999999998" fill="#e3e3e3" />
<rect x="842.6" y="169.3" width="94.0" height="29.799999999999983" fill="#ffffff" />
<rect x="950" y="167.7" width="2" height="36.30000000000001" fill="#a8a8a8" />
<path d="M981 174 L981 196 L968 196Z" fill="#808080" stroke="#303030" stroke-width="1"/><path d="M986 174 L986 196 L999 196Z" fill="#800080" stroke="#303030" stroke-width="1"/>
<rect x="1009.3" y="162" width="46.40000000000009" height="44.5" fill="#f7f7f7" />
<rect x="1009.3" y="162" width="46.40000000000009" height="3" fill="#c4c4c4" />
<rect x="1009.3" y="162" width="3" height="44.5" fill="#c4c4c4" />
<path d="M1045 174 L1045 184 L1022 184Z" fill="#808080" stroke="#303030" stroke-width="1"/><path d="M1045 188 L1045 198 L1022 188Z" fill="#800080" stroke="#303030" stroke-width="1"/>
<rect x="1057.5" y="165.3" width="99.5" height="37.79999999999998" fill="#ffffff" />
<rect x="1057.5" y="165.3" width="97.5" height="35.79999999999998" fill="#a0a0a0" />
<rect x="1059.5" y="167.3" width="95.5" height="33.79999999999998" fill="#696969" />
<rect x="1061.5" y="169.3" width="93.5" height="31.799999999999983" fill="#ffffff" />
<rect x="1059.5" y="199.1" width="95.5" height="2" fill="#e3e3e3" />
<rect x="1153" y="167.3" width="2" height="33.79999999999998" fill="#e3e3e3" />
<rect x="1061.5" y="169.3" width="91.5" height="29.799999999999983" fill="#ffffff" />
<path d="M1172 175 L1192 195 M1192 175 L1172 195" stroke="#000" stroke-width="3.2"/>
<rect x="1216.2" y="167.7" width="2" height="36.30000000000001" fill="#a8a8a8" />
<text x="1236" y="195.5" font-family="Liberation Sans" font-size="24" fill="#800080" font-weight="bold" text-anchor="start" textLength="29.3" lengthAdjust="spacingAndGlyphs" >t−</text>
<text x="1284.2" y="195.5" font-family="Liberation Sans" font-size="24" fill="#800080" font-weight="bold" text-anchor="start" textLength="30.9" lengthAdjust="spacingAndGlyphs" >t+</text>
<text x="1332.3" y="195.5" font-family="Liberation Sans" font-size="24" fill="#800080" font-weight="bold" text-anchor="start" textLength="32.7" lengthAdjust="spacingAndGlyphs" >t=</text>
<rect x="0" y="0" width="2312" height="1.5" fill="#18202c" />
<rect x="0" y="0" width="1.5" height="1744" fill="#18202c" />
<rect x="2310" y="0" width="2" height="1744" fill="#18202c" />
<rect x="0" y="1742" width="2312" height="2" fill="#18202c" />
</svg></body></html>
